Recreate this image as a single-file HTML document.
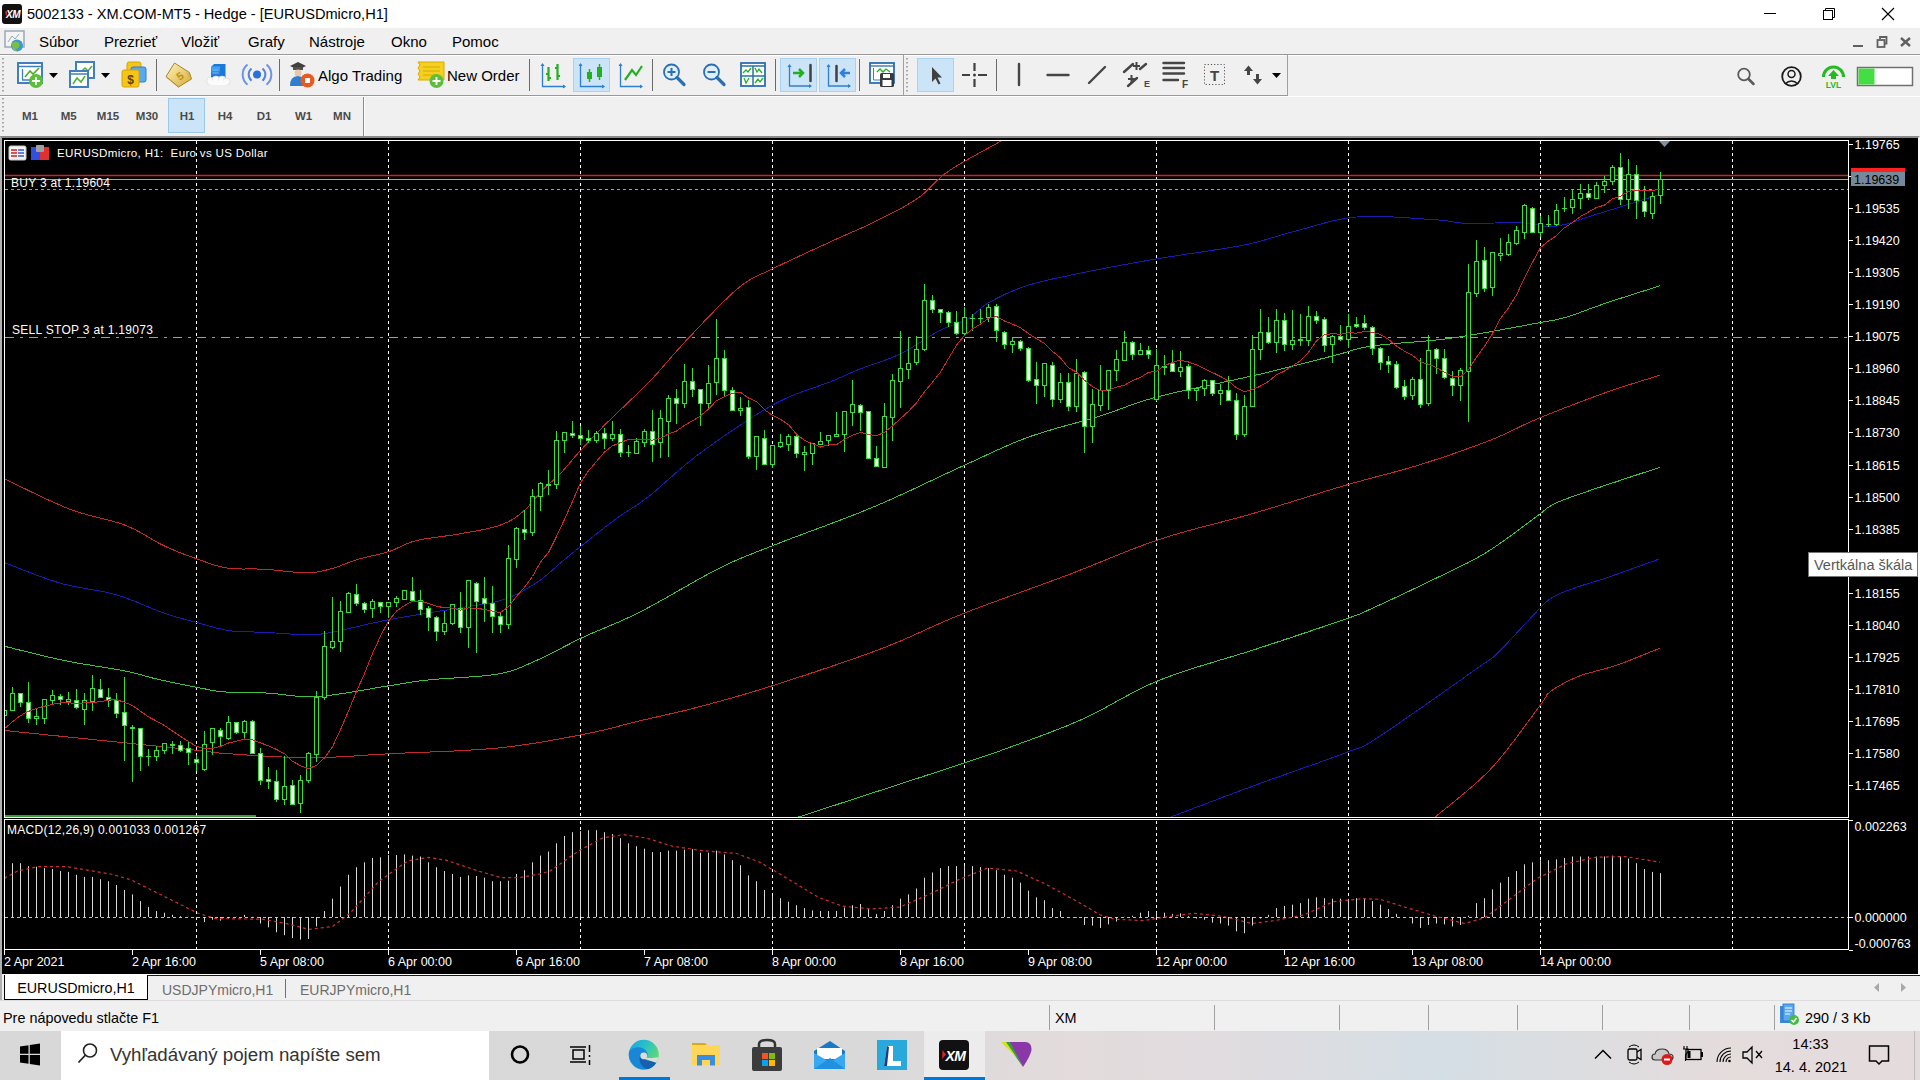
<!DOCTYPE html>
<html><head><meta charset="utf-8">
<style>
*{box-sizing:border-box}
html,body{margin:0;padding:0;width:1920px;height:1080px;overflow:hidden;background:#f0f0f0;font-family:"Liberation Sans",sans-serif;position:relative}
.a{position:absolute}
#title{left:0;top:0;width:1920px;height:28px;background:#fff}
#title .t{left:27px;top:6px;font-size:14.6px;color:#000;white-space:nowrap}
#menu{left:0;top:28px;width:1920px;height:26px;background:#f0f0f0}
#menu span{position:absolute;top:5px;font-size:15px;color:#000}
#tb{left:0;top:54px;width:1920px;height:42px;background:#f0f0f0;border-top:1px solid #999}
#tf{left:0;top:96px;width:1920px;height:40px;background:#f0f0f0}
#tf span{position:absolute;top:14px;font-size:11.5px;font-weight:bold;color:#4a4a4a}
#chartbg{left:0;top:136px;width:1920px;height:838px;background:#000;border-top:2px solid #8a8a8a;border-left:2px solid #b0b0b0;border-right:2px solid #fff}
.pl{position:absolute;left:1854.5px;font-size:12.5px;color:#fff;white-space:nowrap;line-height:16px}
.tl{position:absolute;top:954px;font-size:12.5px;color:#fff;white-space:nowrap;line-height:16px}
.ct{position:absolute;font-size:12px;color:#fff;white-space:nowrap;line-height:14px;letter-spacing:0.3px}
#tabs{left:0;top:974px;width:1920px;height:27px;background:#f0f0f0;border-bottom:1px solid #dcdcdc}
#status{left:0;top:1001px;width:1920px;height:30px;background:#f0f0f0}
#status span{position:absolute;top:9px;font-size:14.4px;color:#000;white-space:nowrap}
.sep{position:absolute;top:4px;width:1px;height:25px;background:#a0a0a0}
#task{left:0;top:1031px;width:1920px;height:49px;background:linear-gradient(90deg,#d8d8d8 0%,#d9d9d9 44%,#e3dbdc 56%,#e0dcdf 64%,#d4dee5 75%,#dcdde0 82%,#e5dcdc 90%,#e4dcdc 100%)}
</style></head><body>
<div id="title" class="a">
  <svg class="a" style="left:2px;top:4px" width="20" height="20"><rect x="0" y="0" width="20" height="20" rx="3" fill="#111"/><text x="11" y="14" font-family="Liberation Sans" font-size="10" font-weight="bold" font-style="italic" fill="#fff" text-anchor="middle" letter-spacing="-0.5">XM</text><path d="M3 8L5.5 6L4.5 13Z" fill="#e02020"/></svg>
  <div class="a t">5002133 - XM.COM-MT5 - Hedge - [EURUSDmicro,H1]</div>
  <div class="a" style="left:1764px;top:13px;width:12px;height:1px;background:#000"></div>
  <svg class="a" style="left:1820px;top:5px" width="20" height="18"><path d="M5.5 5.5V3.5H14.5V12.5H12.5" fill="none" stroke="#000" stroke-width="1"/><rect x="3.5" y="5.5" width="9" height="9" fill="none" stroke="#000" stroke-width="1"/></svg>
  <svg class="a" style="left:1881px;top:7px" width="14" height="14"><path d="M1 1L13 13M13 1L1 13" stroke="#000" stroke-width="1.2"/></svg>
</div>
<div id="menu" class="a">
  <svg class="a" style="left:4px;top:2px" width="22" height="22"><rect x="1" y="1" width="19" height="16" fill="#f4f4f4" stroke="#98a8b8" stroke-width="1.5"/><path d="M4 12L8 6L11 9L15 4" stroke="#9ab" stroke-width="1" fill="none"/><circle cx="13" cy="15.5" r="6" fill="#3a9ad0"/><path d="M8 13Q12 10 15 13Q17 16 13 19Q9 19 8 16Z" fill="#7ac040"/><path d="M8 17Q10 21 13 21Q10 18 8 17Z" fill="#e0b030"/></svg>
  <span style="left:39px">Súbor</span>
  <span style="left:104px">Prezrieť</span>
  <span style="left:181px">Vložiť</span>
  <span style="left:248px">Grafy</span>
  <span style="left:309px">Nástroje</span>
  <span style="left:391px">Okno</span>
  <span style="left:452px">Pomoc</span>
  <div class="a" style="left:1853px;top:17px;width:10px;height:2px;background:#606060"></div>
  <svg class="a" style="left:1875px;top:7px" width="14" height="14"><path d="M5 4V2H11.5V8.5H9.5" fill="none" stroke="#606060" stroke-width="1.8"/><rect x="2.5" y="5" width="7" height="7" fill="none" stroke="#606060" stroke-width="1.8"/></svg>
  <svg class="a" style="left:1899px;top:9px" width="13" height="10"><path d="M2 1L11 9M11 1L2 9" stroke="#606060" stroke-width="2.4"/></svg>
</div>
<div id="tb" class="a"><div class="a" style="left:0;top:0;width:1920px;height:1px;background:#fff"></div><div class="a" style="left:0;top:40px;width:1288px;height:1px;background:#999"></div><div class="a" style="left:0;top:41px;width:1288px;height:1px;background:#fff"></div><span class="a" style="left:318px;top:12px;font-size:15px;color:#000">Algo Trading</span><span class="a" style="left:447px;top:12px;font-size:15px;color:#000">New Order</span></div>
<div id="tf" class="a">
  <div class="a" style="left:168px;top:2px;width:37px;height:35px;background:#cce4f7;border:1px solid #99c9ef"></div>
  <span style="left:10px;width:40px;text-align:center">M1</span><span style="left:48.7px;width:40px;text-align:center">M5</span><span style="left:88px;width:40px;text-align:center">M15</span><span style="left:127px;width:40px;text-align:center">M30</span><span style="left:167px;width:40px;text-align:center">H1</span><span style="left:205px;width:40px;text-align:center">H4</span><span style="left:244px;width:40px;text-align:center">D1</span><span style="left:283.5px;width:40px;text-align:center">W1</span><span style="left:322px;width:40px;text-align:center">MN</span><div class="a" style="left:0;top:0;width:1920px;height:1px;background:#fff"></div><div class="a" style="left:363px;top:1px;width:1px;height:39px;background:#8a8a8a"></div><div class="a" style="left:364px;top:1px;width:1px;height:39px;background:#fff"></div>
</div>
<svg class="a" style="left:0;top:0" width="1920" height="136">
<!-- grips -->
<line x1="3" y1="58" x2="3" y2="94" stroke="#a8a8a8" stroke-width="2" stroke-dasharray="1.5,2.5"/>
<line x1="3" y1="98" x2="3" y2="134" stroke="#a8a8a8" stroke-width="2" stroke-dasharray="1.5,2.5"/>
<line x1="907" y1="58" x2="907" y2="94" stroke="#a8a8a8" stroke-width="2" stroke-dasharray="1.5,2.5"/>
<!-- separators -->
<g stroke="#6a6a6a" stroke-width="1">
<line x1="156.5" y1="59" x2="156.5" y2="91"/>
<line x1="279.5" y1="59" x2="279.5" y2="91"/>
<line x1="529.5" y1="59" x2="529.5" y2="91"/>
<line x1="652.5" y1="59" x2="652.5" y2="91"/>
<line x1="775.5" y1="59" x2="775.5" y2="91"/>
<line x1="859.5" y1="59" x2="859.5" y2="91"/>
<line x1="996.5" y1="59" x2="996.5" y2="91"/>
</g>
<line x1="903.5" y1="55" x2="903.5" y2="95" stroke="#a0a0a0"/>
<line x1="1287.5" y1="55" x2="1287.5" y2="95" stroke="#a0a0a0"/>
<!-- highlights -->
<g fill="#cce4f7" stroke="#a8d2f2">
<rect x="573.5" y="58.5" width="36" height="33"/>
<rect x="780.5" y="58.5" width="36" height="33"/>
<rect x="819.5" y="58.5" width="36" height="33"/>
<rect x="917.5" y="58.5" width="36" height="33"/>
</g>
<!-- new chart -->
<rect x="18" y="63" width="24" height="20" fill="#fff" stroke="#3f7fc0" stroke-width="2"/>
<line x1="18" y1="66.5" x2="42" y2="66.5" stroke="#3f7fc0" stroke-width="1.5"/>
<path d="M22.5 69V80H33" stroke="#3f7fc0" stroke-width="1.3" fill="none"/>
<path d="M25 77L30 71L33 74L39 68" stroke="#4caf2a" stroke-width="1.6" fill="none"/>
<circle cx="36" cy="81" r="7" fill="#5cbf3a"/>
<path d="M36 77V85M32 81H40" stroke="#fff" stroke-width="1.8"/>
<polygon points="49,73 58,73 53.5,78" fill="#000"/>
<!-- profiles -->
<rect x="76" y="62" width="18" height="16" fill="#fff" stroke="#3f7fc0" stroke-width="2"/>
<path d="M80 73L85 68L88 71L92 66" stroke="#4caf2a" stroke-width="1.5" fill="none"/>
<rect x="70" y="71" width="18" height="16" fill="#fff" stroke="#3f7fc0" stroke-width="2"/>
<line x1="70" y1="74" x2="88" y2="74" stroke="#3f7fc0" stroke-width="1.5"/>
<path d="M73 84L77 78L81 82L85 76" stroke="#4caf2a" stroke-width="1.5" fill="none"/>
<polygon points="101,73 110,73 105.5,78" fill="#000"/>
<!-- money -->
<rect x="127" y="62" width="14" height="12" rx="2" fill="#f5c518" stroke="#d9a400"/>
<rect x="131" y="67" width="15" height="15" rx="2" fill="#5aa9f0" stroke="#2f7fd0"/>
<rect x="122" y="70" width="17" height="17" rx="2" fill="#f5c518" stroke="#d9a400"/>
<text x="130.5" y="84" font-family="Liberation Sans" font-size="12" font-weight="bold" fill="#5a4200" text-anchor="middle">$</text>
<!-- book 5 -->
<defs><linearGradient id="bk" x1="0" y1="0" x2="1" y2="1"><stop offset="0" stop-color="#fff4c0"/><stop offset="1" stop-color="#d8aa30"/></linearGradient>
<linearGradient id="sv" x1="0" y1="0" x2="0" y2="1"><stop offset="0" stop-color="#4aa8f8"/><stop offset="1" stop-color="#1060c8"/></linearGradient></defs>
<path d="M174.5 63L189.5 72.5L191.5 79L178.5 87L166 76.5Z" fill="url(#bk)" stroke="#9a7a20" stroke-width="0.9"/>
<path d="M178.5 87L166 76.5L167 78L179 88Z" fill="#b08a28"/>
<path d="M186 72L190 77M188 73L191 78" stroke="#c8a850" stroke-width="0.6"/>
<text x="180" y="80" font-family="Liberation Sans" font-size="11" font-weight="bold" fill="#c09010" text-anchor="middle" transform="rotate(-35 180 76)">5</text>
<!-- server cloud -->
<path d="M211 67L214 64H225.5V78L220 80H211Z" fill="#1a78d8"/>
<rect x="211" y="66.5" width="9" height="13" fill="url(#sv)"/>
<path d="M212.5 70H218.5M212.5 73H218.5" stroke="#8ac8ff" stroke-width="0.8"/>
<g fill="#fbfbfb" stroke="#dadada" stroke-width="0.7">
<circle cx="210.5" cy="81" r="3.8"/><circle cx="216" cy="80" r="4"/><circle cx="222" cy="80" r="4"/><circle cx="226.5" cy="81.5" r="3.5"/>
</g>
<rect x="209" y="80.5" width="19" height="4.5" rx="2" fill="#fbfbfb"/>
<!-- signal -->
<circle cx="257" cy="74.6" r="4" fill="#2a6ee0"/>
<path d="M251.5 68.5A8 8 0 0 0 251.5 80.7M262.5 68.5A8 8 0 0 1 262.5 80.7" stroke="#3a70d8" stroke-width="2" fill="none" opacity="0.85"/>
<path d="M247.5 64.5A13 13 0 0 0 247.5 84.7M266.5 64.5A13 13 0 0 1 266.5 84.7" stroke="#4a7ee0" stroke-width="2" fill="none" opacity="0.8"/>
<!-- algo -->
<path d="M290 66L298 62L306 66L298 70Z" fill="#404040"/>
<rect x="293" y="67" width="10" height="3" fill="#505050"/>
<circle cx="298" cy="73" r="3.5" fill="#e8c8a8"/>
<path d="M290 86Q290 76 298 76Q305 76 305 86Z" fill="#2f7fd0"/>
<circle cx="307.5" cy="80.5" r="7" fill="#e85a20"/>
<rect x="305" y="78" width="5" height="5" fill="#fff"/>
<!-- new order -->
<path d="M418 62H444V80H418L420 77L418 74L420 71L418 68L420 65Z" fill="#f5d020" stroke="#d8a800"/>
<path d="M423 67H440M423 71H440M423 75H436" stroke="#d8a800" stroke-width="1"/>
<circle cx="436.5" cy="81" r="7" fill="#5cbf3a"/>
<path d="M436.5 77V85M432.5 81H440.5" stroke="#fff" stroke-width="1.8"/>
<!-- bar chart -->
<g stroke="#2f7fd0" stroke-width="1.3" fill="#2f7fd0">
<path d="M542.5 64V86.5H565" fill="none"/>
<polygon points="540.5,66 542.5,63 544.5,66" stroke="none"/>
<polygon points="563,84.5 566,86.5 563,88.5" stroke="none"/>
<path d="M580.5 64V86.5H604" fill="none"/>
<polygon points="578.5,66 580.5,63 582.5,66" stroke="none"/>
<polygon points="602,84.5 605,86.5 602,88.5" stroke="none"/>
<path d="M620.5 64V86.5H642" fill="none"/>
<polygon points="618.5,66 620.5,63 622.5,66" stroke="none"/>
<polygon points="640,84.5 643,86.5 640,88.5" stroke="none"/>
</g>
<path d="M548.5 67V81M546 74H548.5M551 78H548.5M557.5 64V80M555 68H557.5M560 76H557.5" stroke="#22b022" stroke-width="2.2" fill="none"/>
<path d="M589.5 69V82M599.5 64V80" stroke="#22b022" stroke-width="1.5"/>
<rect x="587" y="72" width="5" height="7" fill="#22b022"/>
<rect x="597" y="67" width="5" height="10" fill="#22b022"/>
<path d="M625 80L632 70L636 75L642 66" stroke="#22b022" stroke-width="2.2" fill="none"/>
<!-- zoom in/out -->
<circle cx="671.5" cy="72" r="7.5" fill="#e0f0fb" stroke="#2a6fb0" stroke-width="1.8"/>
<path d="M677 77.5L684 84.5" stroke="#2a6fb0" stroke-width="3.2" stroke-linecap="round"/>
<path d="M671.5 68V76M667.5 72H675.5" stroke="#2a6fb0" stroke-width="2"/>
<circle cx="711.5" cy="72" r="7.5" fill="#e0f0fb" stroke="#2a6fb0" stroke-width="1.8"/>
<path d="M717 77.5L724 84.5" stroke="#2a6fb0" stroke-width="3.2" stroke-linecap="round"/>
<path d="M707.5 72H715.5" stroke="#2a6fb0" stroke-width="2"/>
<!-- tile -->
<rect x="741" y="63" width="24" height="23" fill="#fff" stroke="#2a6fb0" stroke-width="1.8"/>
<path d="M741 66H765M753 66V86M741 76H765" stroke="#2a6fb0" stroke-width="1.5"/>
<path d="M743 73L746 70L748 72L751 68M755 68L757 72L759 69L762 73M744 78L746 83L749 78M755 83L758 79L760 82L763 78" stroke="#22b022" stroke-width="1.3" fill="none"/>
<!-- autoscroll / shift -->
<g stroke="#2f7fd0" stroke-width="1.3" fill="#2f7fd0">
<path d="M789.5 65V86H811" fill="none"/>
<polygon points="787.5,67 789.5,64 791.5,67" stroke="none"/>
<polygon points="809,84 812,86 809,88" stroke="none"/>
<path d="M828.5 65V86H850" fill="none"/>
<polygon points="826.5,67 828.5,64 830.5,67" stroke="none"/>
<polygon points="848,84 851,86 848,88" stroke="none"/>
</g>
<path d="M793 73H803M799 69L803 73L799 77" stroke="#22b022" stroke-width="2.5" fill="none"/>
<path d="M810.5 65V81" stroke="#404040" stroke-width="2.5" stroke-linecap="round"/>
<path d="M836.5 66V81" stroke="#404040" stroke-width="2.5" stroke-linecap="round"/>
<path d="M850 73H841M845 69L841 73L845 77" stroke="#2f7fe0" stroke-width="2.5" fill="none"/>
<!-- save chart -->
<rect x="870" y="63" width="24" height="20" fill="#fff" stroke="#2a6fb0" stroke-width="1.8"/>
<line x1="870" y1="66" x2="894" y2="66" stroke="#2a6fb0" stroke-width="1.3"/>
<path d="M873.5 68V80H880" stroke="#2f7fd0" stroke-width="1" fill="none"/>
<path d="M877 72L880 69L883 72L886 69L890 72" stroke="#22b022" stroke-width="1.3" fill="none"/>
<rect x="880" y="73" width="14" height="14" rx="1.5" fill="#3a3a3a"/>
<rect x="883" y="74" width="7" height="4" fill="#fff"/>
<rect x="882.5" y="80" width="9" height="6" fill="#fff"/>
<!-- cursor -->
<path d="M932 67L932 82L935.5 78.5L938.5 84.5L940.5 83.5L937.5 77.5L942 77.5Z" fill="#404040"/>
<!-- crosshair -->
<path d="M962 75H970M978 75H987M974.5 63V71M974.5 79V87" stroke="#404040" stroke-width="2.2"/>
<circle cx="974.5" cy="75" r="1.5" fill="#404040"/>
<!-- line tools -->
<g stroke="#454545" stroke-width="2.4" stroke-linecap="round" fill="none">
<path d="M1019 64V85"/>
<path d="M1047.5 75H1068.5"/>
<path d="M1089 83L1105 67"/>
<path d="M1124 72L1133 64M1128 86L1137 78M1140 69L1146 64"/>
<path d="M1163.5 63H1184M1163.5 68H1184M1163.5 73.5H1184M1163.5 80H1178"/>

</g>
<path d="M1136.5 62V70M1133 66H1140M1131.5 75V83M1128 79H1135" stroke="#454545" stroke-width="2"/>
<text x="1147" y="87" font-family="Liberation Sans" font-size="9" font-weight="bold" fill="#454545" text-anchor="middle">E</text>
<text x="1185" y="88" font-family="Liberation Sans" font-size="10" font-weight="bold" fill="#454545" text-anchor="middle">F</text>
<rect x="1204.5" y="64.5" width="20" height="20" fill="none" stroke="#555" stroke-dasharray="1.2,2"/>
<text x="1214.5" y="81" font-family="Liberation Sans" font-size="15" font-weight="bold" fill="#454545" text-anchor="middle">T</text>
<polygon points="1244,71 1248.5,65.5 1253,71" fill="#454545"/><rect x="1247" y="70" width="3" height="5" fill="#454545"/><rect x="1256" y="74" width="3" height="6" fill="#454545"/><polygon points="1253,79 1257.5,84.5 1262,79" fill="#454545"/>
<polygon points="1272,73 1281,73 1276.5,78" fill="#000"/>
<!-- right icons -->
<circle cx="1744" cy="74.5" r="5.8" fill="none" stroke="#5a5a5a" stroke-width="1.8"/>
<path d="M1748.5 79L1753.5 84" stroke="#5a5a5a" stroke-width="2.5" stroke-linecap="round"/>
<circle cx="1791.5" cy="76.5" r="9.3" fill="none" stroke="#1a1a1a" stroke-width="1.8"/>
<circle cx="1791.5" cy="74" r="3.5" fill="none" stroke="#1a1a1a" stroke-width="1.5"/>
<path d="M1785 84Q1791.5 78 1798 84" fill="none" stroke="#1a1a1a" stroke-width="1.5"/>
<path d="M1823.5 77A10 10 0 0 1 1843.5 77" fill="none" stroke="#22bb22" stroke-width="3"/>
<polygon points="1833.5,70 1839,76 1836,76 1836,79 1831,79 1831,76 1828,76" fill="#22bb22"/>
<text x="1833.5" y="88" font-family="Liberation Sans" font-size="8.5" font-weight="bold" fill="#22bb22" text-anchor="middle">LVL</text>
<rect x="1857.5" y="67.5" width="55" height="18" fill="#fff" stroke="#707070" stroke-width="1.5"/>
<rect x="1858.5" y="68.5" width="16" height="16" fill="#44dd44"/>
</svg>

<div id="chartbg" class="a"></div>
<svg width="1920" height="1080" style="position:absolute;left:0;top:0">
<defs><clipPath id="mc"><rect x="5" y="141" width="1843" height="676"/></clipPath><clipPath id="dc"><rect x="5" y="821" width="1843" height="129"/></clipPath></defs>
<rect x="4.5" y="140.5" width="1844" height="677" fill="none" stroke="#fff" stroke-width="1"/>
<rect x="4.5" y="819.5" width="1844" height="130" fill="none" stroke="#fff" stroke-width="1"/>
<line x1="196.5" y1="141" x2="196.5" y2="817" stroke="#fff" stroke-dasharray="3,3"/>
<line x1="196.5" y1="821" x2="196.5" y2="949" stroke="#fff" stroke-dasharray="3,3"/>
<line x1="388.5" y1="141" x2="388.5" y2="817" stroke="#fff" stroke-dasharray="3,3"/>
<line x1="388.5" y1="821" x2="388.5" y2="949" stroke="#fff" stroke-dasharray="3,3"/>
<line x1="580.5" y1="141" x2="580.5" y2="817" stroke="#fff" stroke-dasharray="3,3"/>
<line x1="580.5" y1="821" x2="580.5" y2="949" stroke="#fff" stroke-dasharray="3,3"/>
<line x1="772.5" y1="141" x2="772.5" y2="817" stroke="#fff" stroke-dasharray="3,3"/>
<line x1="772.5" y1="821" x2="772.5" y2="949" stroke="#fff" stroke-dasharray="3,3"/>
<line x1="964.5" y1="141" x2="964.5" y2="817" stroke="#fff" stroke-dasharray="3,3"/>
<line x1="964.5" y1="821" x2="964.5" y2="949" stroke="#fff" stroke-dasharray="3,3"/>
<line x1="1156.5" y1="141" x2="1156.5" y2="817" stroke="#fff" stroke-dasharray="3,3"/>
<line x1="1156.5" y1="821" x2="1156.5" y2="949" stroke="#fff" stroke-dasharray="3,3"/>
<line x1="1348.5" y1="141" x2="1348.5" y2="817" stroke="#fff" stroke-dasharray="3,3"/>
<line x1="1348.5" y1="821" x2="1348.5" y2="949" stroke="#fff" stroke-dasharray="3,3"/>
<line x1="1540.5" y1="141" x2="1540.5" y2="817" stroke="#fff" stroke-dasharray="3,3"/>
<line x1="1540.5" y1="821" x2="1540.5" y2="949" stroke="#fff" stroke-dasharray="3,3"/>
<line x1="1732.5" y1="141" x2="1732.5" y2="817" stroke="#fff" stroke-dasharray="3,3"/>
<line x1="1732.5" y1="821" x2="1732.5" y2="949" stroke="#fff" stroke-dasharray="3,3"/>
<g clip-path="url(#mc)">
<line x1="5" y1="175.5" x2="1848" y2="175.5" stroke="#d02020" stroke-width="1.3"/>
<line x1="5" y1="179.5" x2="1848" y2="179.5" stroke="#a0a8b0" stroke-width="1"/>
<line x1="5" y1="189.5" x2="1848" y2="189.5" stroke="#6ac46a" stroke-dasharray="3,3"/>
<line x1="5" y1="337.5" x2="1848" y2="337.5" stroke="#6ac46a" stroke-dasharray="9,6,3,6"/>
<line x1="5" y1="816" x2="256" y2="816" stroke="#50d050" stroke-width="1.5"/>
<polyline points="4.6,478.9 6.3,479.7 8.3,480.7 10.5,481.7 13.0,483.0 15.7,484.3 18.7,485.7 21.7,487.2 25.0,488.8 28.3,490.4 31.8,492.1 35.3,493.8 38.9,495.5 42.5,497.2 46.1,498.9 49.7,500.5 53.2,502.1 56.7,503.7 60.1,505.2 63.3,506.6 66.4,507.8 69.4,509.0 72.7,510.2 76.1,511.4 79.4,512.5 82.7,513.4 86.0,514.4 89.2,515.3 92.4,516.1 95.6,516.9 98.8,517.7 101.9,518.4 105.0,519.2 108.0,520.0 111.0,520.8 113.9,521.6 116.8,522.4 119.6,523.3 122.3,524.2 125.0,525.2 128.6,526.7 132.0,528.2 135.3,529.8 138.5,531.5 141.7,533.2 144.7,535.0 147.6,536.7 150.5,538.4 153.3,540.0 156.1,541.7 158.9,543.2 161.6,544.6 164.4,546.0 167.9,547.6 171.4,549.1 174.7,550.5 178.0,551.9 181.2,553.1 184.3,554.3 187.5,555.5 190.6,556.6 193.7,557.7 196.8,558.8 199.9,559.9 202.9,561.0 205.8,562.1 208.7,563.1 211.6,564.1 214.5,565.1 217.4,565.9 220.5,566.7 223.6,567.4 226.9,568.0 229.7,568.4 232.6,568.6 235.6,568.8 238.5,568.9 241.6,569.0 244.7,569.0 247.8,568.9 251.0,568.9 254.2,568.9 257.4,569.0 260.6,569.0 263.9,569.2 267.0,569.4 270.2,569.7 273.5,570.0 276.9,570.3 280.4,570.7 283.8,571.1 287.2,571.4 290.6,571.8 293.9,572.1 297.0,572.3 300.1,572.5 302.9,572.7 305.6,572.7 309.5,572.6 313.0,572.4 316.1,572.1 319.0,571.7 321.7,571.1 324.5,570.5 327.4,569.8 330.5,569.0 333.4,568.2 336.3,567.2 339.3,566.2 342.2,565.0 345.2,563.9 348.3,562.7 351.3,561.5 354.5,560.4 357.7,559.4 360.7,558.6 363.7,557.8 366.9,557.0 370.0,556.3 373.2,555.6 376.5,554.9 379.6,554.1 382.8,553.3 385.8,552.5 388.8,551.6 391.9,550.5 394.8,549.3 397.6,548.0 400.3,546.7 403.1,545.4 405.9,544.1 409.0,542.9 412.3,541.7 416.0,540.7 418.6,540.1 421.3,539.5 424.2,539.0 427.1,538.5 430.2,538.1 433.3,537.6 436.5,537.2 439.8,536.8 443.0,536.4 446.2,535.9 449.5,535.5 452.6,535.0 455.8,534.5 458.8,534.0 462.1,533.4 465.4,532.8 468.8,532.2 472.2,531.6 475.6,531.0 478.9,530.4 482.2,529.7 485.5,529.1 488.7,528.4 491.7,527.6 494.6,526.9 497.4,526.1 500.0,525.2 504.3,523.5 508.1,521.8 511.5,520.0 514.7,518.0 517.7,515.9 520.6,513.5 523.7,511.0 527.4,507.6 531.0,503.6 534.6,499.4 538.0,495.3 541.3,491.4 544.4,488.0 548.4,484.3 551.9,481.5 555.3,478.6 559.3,474.8 562.4,471.5 565.7,467.7 569.1,463.6 572.7,459.4 576.3,455.2 580.0,451.0 583.2,447.5 586.6,443.8 590.0,440.2 593.5,436.5 596.9,432.9 600.4,429.4 603.7,426.0 606.9,422.8 610.1,419.7 613.2,416.7 616.3,413.7 619.5,410.7 622.7,407.6 626.0,404.4 628.9,401.6 631.8,398.9 634.6,396.2 637.6,393.5 640.6,390.5 643.8,387.4 647.3,383.9 651.0,380.0 653.6,377.2 656.4,374.2 659.2,371.0 662.0,367.7 665.0,364.3 668.1,360.8 671.2,357.2 674.4,353.5 677.8,349.8 681.2,346.0 684.7,342.1 688.3,338.3 691.1,335.3 694.1,332.2 697.2,328.9 700.4,325.5 703.6,322.1 707.0,318.6 710.3,315.1 713.7,311.6 717.1,308.2 720.4,304.8 723.7,301.5 727.0,298.4 730.1,295.4 733.1,292.6 736.0,290.0 738.8,287.7 742.5,284.8 745.8,282.4 748.8,280.4 751.7,278.7 754.4,277.2 757.2,275.9 760.0,274.6 763.0,273.3 766.2,271.9 769.8,270.2 773.8,268.3 776.3,267.0 779.0,265.7 781.9,264.3 784.8,262.9 787.9,261.5 791.0,260.0 794.3,258.5 797.5,257.0 800.8,255.4 804.2,253.9 807.5,252.3 810.8,250.8 814.1,249.3 817.3,247.8 820.5,246.4 823.6,245.0 826.6,243.6 829.5,242.3 832.2,241.0 835.7,239.4 839.1,237.8 842.4,236.4 845.6,235.0 848.6,233.6 851.6,232.3 854.6,231.1 857.5,229.8 860.4,228.5 863.2,227.2 866.1,225.9 869.0,224.5 872.0,223.1 875.0,221.6 878.1,220.1 881.2,218.5 884.4,216.9 887.5,215.3 890.7,213.7 893.9,212.1 897.1,210.4 900.2,208.8 903.3,207.1 906.3,205.4 909.3,203.6 912.2,201.9 915.0,200.1 917.7,198.3 921.2,195.7 924.3,193.2 927.2,190.5 929.9,187.8 932.5,185.1 935.3,182.4 938.1,179.6 941.3,176.8 944.8,173.9 948.8,171.0 951.3,169.3 954.1,167.5 957.1,165.7 960.3,163.8 963.7,161.8 967.2,159.8 970.7,157.8 974.3,155.8 977.8,153.8 981.4,151.9 984.8,150.0 988.1,148.2 991.2,146.5 994.2,144.9 996.8,143.4 999.2,142.1 1001.3,141.0 1003.0,140.0" fill="none" stroke="#c02a2a" stroke-width="1" shape-rendering="crispEdges"/>
<polyline points="4.6,562.7 6.3,563.3 8.3,564.1 10.7,565.0 13.2,566.0 16.0,567.1 19.0,568.3 22.2,569.6 25.5,570.9 28.9,572.2 32.4,573.5 36.0,574.9 39.6,576.2 43.2,577.5 46.8,578.8 50.3,580.0 53.7,581.1 57.0,582.2 60.2,583.1 63.3,584.0 66.4,584.7 69.5,585.5 72.7,586.1 75.8,586.8 79.0,587.4 82.1,587.9 85.2,588.5 88.4,589.0 91.5,589.6 94.6,590.1 97.7,590.6 100.8,591.2 103.8,591.8 106.8,592.5 109.8,593.2 112.8,593.9 115.7,594.7 119.0,595.7 122.2,596.7 125.5,597.9 128.7,599.1 132.0,600.3 135.2,601.5 138.4,602.8 141.5,604.1 144.6,605.4 147.6,606.6 150.6,607.9 153.5,609.1 156.4,610.2 159.1,611.3 161.8,612.3 164.4,613.2 168.3,614.5 171.9,615.7 175.3,616.7 178.5,617.6 181.6,618.5 184.6,619.3 187.6,620.1 190.6,620.9 193.6,621.7 196.8,622.5 200.0,623.4 203.2,624.3 206.4,625.2 209.5,626.1 212.7,627.0 215.9,627.9 219.1,628.7 222.4,629.4 225.8,630.1 229.2,630.6 232.1,631.0 235.1,631.3 238.1,631.5 241.1,631.6 244.2,631.8 247.3,631.9 250.4,631.9 253.5,632.0 256.7,632.1 259.8,632.1 263.0,632.3 266.2,632.4 269.2,632.6 272.3,632.8 275.4,633.0 278.6,633.2 281.8,633.5 285.1,633.7 288.2,633.9 291.4,634.1 294.5,634.3 297.4,634.5 300.3,634.6 303.0,634.7 305.6,634.7 309.2,634.7 312.1,634.7 314.5,634.7 316.9,634.5 319.4,634.3 322.3,633.9 325.9,633.3 330.5,632.5 332.8,632.1 335.2,631.6 337.7,631.1 340.4,630.5 343.2,629.9 346.0,629.2 349.0,628.5 352.1,627.8 355.2,627.1 358.4,626.3 361.7,625.6 365.0,624.8 368.4,624.0 371.8,623.3 375.2,622.5 378.6,621.8 382.0,621.1 385.4,620.4 388.8,619.7 391.6,619.2 394.6,618.6 397.6,618.1 400.6,617.6 403.7,617.0 406.9,616.5 410.1,615.9 413.4,615.4 416.6,614.9 419.9,614.3 423.1,613.8 426.4,613.3 429.6,612.8 432.8,612.2 436.0,611.7 439.1,611.2 442.2,610.7 445.2,610.3 448.1,609.8 450.9,609.3 453.7,608.9 456.3,608.4 458.8,608.0 462.7,607.3 466.4,606.8 469.9,606.2 473.2,605.8 476.4,605.3 479.5,604.9 482.4,604.5 485.2,604.0 488.0,603.5 490.7,603.0 493.4,602.4 496.1,601.8 498.9,601.0 501.6,600.2 505.1,599.0 508.5,597.7 511.9,596.3 515.2,594.8 518.4,593.2 521.6,591.6 524.7,589.9 527.7,588.1 530.7,586.3 533.6,584.5 536.5,582.7 539.9,580.4 543.1,578.0 546.3,575.4 549.3,572.8 552.3,570.2 555.2,567.6 558.1,565.0 561.0,562.4 563.9,560.0 567.1,557.4 570.2,554.9 573.2,552.4 576.3,550.0 579.3,547.6 582.4,545.1 585.6,542.6 588.9,540.0 592.0,537.6 595.2,535.0 598.4,532.4 601.7,529.8 605.1,527.2 608.5,524.6 611.8,522.0 615.2,519.4 618.5,517.0 621.7,514.8 624.6,512.8 627.5,511.0 630.4,509.2 633.4,507.3 636.5,505.3 639.9,503.0 643.7,500.2 648.0,497.0 650.4,495.1 653.0,493.0 655.6,490.8 658.2,488.5 661.0,486.0 663.8,483.5 666.7,481.0 669.7,478.3 672.8,475.6 675.9,472.8 679.1,470.1 682.4,467.3 685.8,464.4 689.2,461.6 692.7,458.8 696.3,456.0 700.0,453.3 702.7,451.3 705.4,449.3 708.3,447.3 711.2,445.2 714.2,443.0 717.3,440.8 720.4,438.6 723.6,436.4 726.8,434.2 730.0,432.0 733.2,429.8 736.5,427.6 739.8,425.4 743.0,423.2 746.3,421.1 749.5,419.0 752.7,417.0 755.9,415.0 759.1,413.0 762.1,411.1 765.2,409.3 768.1,407.6 771.0,406.0 773.8,404.4 777.3,402.6 780.7,400.8 784.2,399.2 787.6,397.6 791.0,396.1 794.4,394.7 797.8,393.4 801.0,392.2 804.3,391.0 807.5,389.8 810.6,388.7 813.6,387.7 816.5,386.7 819.4,385.7 822.2,384.7 824.9,383.8 827.4,382.9 829.9,381.9 832.2,381.0 836.6,379.2 840.2,377.6 843.3,376.3 846.0,375.0 848.5,373.9 851.0,372.8 853.6,371.6 856.5,370.4 860.0,369.0 862.7,368.0 865.5,366.9 868.4,365.9 871.4,364.9 874.5,363.8 877.6,362.8 880.8,361.7 884.1,360.5 887.3,359.3 890.5,358.1 893.7,356.8 896.9,355.4 900.0,354.0 903.1,352.4 906.3,350.7 909.5,348.9 912.7,347.0 915.9,345.0 919.1,343.0 922.3,341.0 925.5,339.0 928.6,337.1 931.6,335.2 934.5,333.5 937.3,331.8 940.0,330.4 943.7,328.6 947.2,327.1 950.6,325.8 953.8,324.6 956.9,323.6 959.9,322.5 962.7,321.4 965.5,320.2 968.2,318.8 971.7,316.5 974.6,314.0 977.3,311.4 980.1,308.8 983.4,306.0 987.7,303.3 990.2,301.9 992.8,300.5 995.6,299.0 998.5,297.5 1001.5,296.0 1004.7,294.4 1008.0,292.9 1011.5,291.4 1015.0,289.9 1018.8,288.5 1022.6,287.1 1026.6,285.8 1029.2,285.0 1031.9,284.2 1034.6,283.4 1037.4,282.7 1040.2,281.9 1043.1,281.2 1046.0,280.5 1049.0,279.8 1052.1,279.1 1055.2,278.4 1058.4,277.7 1061.6,277.0 1064.8,276.4 1068.1,275.7 1071.4,275.0 1074.7,274.3 1078.1,273.6 1081.5,272.9 1085.0,272.2 1087.8,271.6 1090.5,271.1 1093.4,270.5 1096.2,269.9 1099.1,269.4 1102.0,268.8 1104.9,268.2 1107.9,267.7 1110.9,267.1 1113.9,266.5 1116.9,266.0 1120.0,265.4 1123.0,264.8 1126.1,264.3 1129.3,263.7 1132.4,263.1 1135.6,262.6 1138.8,262.0 1142.0,261.4 1145.2,260.9 1148.4,260.3 1151.7,259.7 1155.0,259.2 1158.3,258.6 1161.2,258.1 1164.1,257.6 1167.1,257.1 1170.2,256.7 1173.3,256.2 1176.5,255.7 1179.7,255.2 1182.9,254.7 1186.1,254.2 1189.4,253.7 1192.7,253.3 1196.0,252.8 1199.3,252.3 1202.5,251.8 1205.8,251.3 1209.0,250.8 1212.2,250.3 1215.4,249.9 1218.6,249.4 1221.6,248.9 1224.7,248.4 1227.7,247.9 1230.6,247.4 1233.4,246.9 1236.2,246.5 1238.8,246.0 1241.4,245.5 1243.9,245.0 1248.0,244.2 1251.8,243.3 1255.4,242.5 1258.7,241.6 1261.9,240.8 1264.9,239.9 1267.8,239.1 1270.6,238.2 1273.4,237.4 1276.1,236.6 1278.9,235.7 1281.8,234.9 1284.7,234.0 1287.8,233.1 1291.0,232.3 1294.4,231.4 1297.2,230.7 1300.1,229.9 1302.9,229.1 1305.8,228.3 1308.8,227.5 1311.7,226.6 1314.7,225.7 1317.7,224.9 1320.7,224.0 1323.8,223.2 1326.9,222.4 1330.0,221.6 1333.2,220.8 1336.4,220.1 1339.7,219.4 1343.0,218.8 1346.3,218.2 1349.7,217.8 1353.1,217.3 1356.6,217.0 1359.5,216.8 1362.4,216.6 1365.5,216.5 1368.6,216.5 1371.8,216.4 1375.1,216.4 1378.5,216.5 1381.8,216.6 1385.2,216.7 1388.7,216.8 1392.1,216.9 1395.5,217.1 1398.9,217.3 1402.3,217.5 1405.6,217.7 1408.9,217.9 1412.1,218.2 1415.3,218.4 1418.4,218.6 1421.3,218.8 1424.2,219.0 1427.0,219.2 1429.6,219.4 1432.1,219.6 1434.4,219.7 1439.1,220.0 1443.2,220.4 1446.6,220.8 1449.6,221.2 1452.3,221.7 1454.8,222.1 1457.3,222.5 1459.9,222.9 1462.7,223.2 1465.8,223.4 1469.4,223.6 1472.2,223.7 1475.1,223.7 1478.1,223.6 1481.3,223.5 1484.6,223.4 1487.9,223.3 1491.3,223.2 1494.7,223.0 1498.1,222.8 1501.5,222.7 1504.8,222.6 1508.1,222.5 1511.3,222.4 1514.3,222.3 1517.2,222.3 1520.0,222.4 1523.7,222.6 1527.2,223.0 1530.5,223.5 1533.6,224.1 1536.5,224.7 1539.4,225.3 1542.4,225.9 1545.3,226.3 1548.4,226.5 1551.6,226.5 1555.0,226.3 1557.8,225.9 1560.5,225.4 1563.3,224.8 1566.1,224.2 1568.9,223.4 1571.7,222.5 1574.6,221.6 1577.6,220.6 1580.7,219.5 1583.9,218.4 1587.1,217.3 1590.5,216.2 1594.0,215.0 1597.7,213.9 1600.4,213.1 1603.4,212.1 1606.6,211.2 1609.9,210.1 1613.3,209.1 1616.9,208.0 1620.5,206.8 1624.2,205.7 1627.8,204.5 1631.5,203.4 1635.1,202.2 1638.6,201.1 1642.0,200.1 1645.2,199.0 1648.3,198.1 1651.1,197.2 1653.8,196.3 1656.1,195.6 1658.2,194.9 1659.9,194.4" fill="none" stroke="#1a1ab0" stroke-width="1" shape-rendering="crispEdges"/>
<polyline points="4.6,646.3 6.3,646.7 8.2,647.2 10.4,647.7 12.8,648.3 15.4,649.0 18.2,649.7 21.2,650.4 24.3,651.2 27.6,652.0 30.9,652.8 34.4,653.6 37.8,654.5 41.3,655.3 44.8,656.1 48.3,657.0 51.8,657.8 55.2,658.5 58.5,659.3 61.7,660.0 64.8,660.6 67.8,661.2 70.9,661.8 74.1,662.4 77.3,663.0 80.5,663.5 83.7,664.1 87.0,664.6 90.2,665.1 93.4,665.7 96.6,666.2 99.8,666.7 102.9,667.2 106.0,667.7 109.0,668.2 111.9,668.6 114.7,669.1 117.5,669.6 120.1,670.1 122.6,670.5 125.0,671.0 129.3,671.9 133.1,672.8 136.5,673.6 139.6,674.4 142.5,675.2 145.3,676.0 148.0,676.8 150.9,677.6 154.0,678.4 157.4,679.2 160.2,679.8 163.2,680.5 166.3,681.1 169.4,681.8 172.6,682.5 175.8,683.1 179.0,683.8 182.2,684.4 185.3,685.1 188.4,685.7 191.3,686.2 194.1,686.8 196.8,687.3 200.3,688.0 203.5,688.6 206.4,689.2 209.1,689.8 211.9,690.3 214.7,690.8 217.6,691.2 220.9,691.6 224.5,691.9 227.2,692.1 230.1,692.2 233.0,692.3 236.0,692.4 239.1,692.5 242.3,692.5 245.5,692.5 248.9,692.6 252.2,692.6 255.7,692.7 259.1,692.7 262.7,692.8 266.2,693.0 269.1,693.2 272.0,693.4 274.9,693.7 277.8,694.0 280.7,694.4 283.7,694.8 286.7,695.1 289.7,695.5 292.8,695.8 296.0,696.1 299.3,696.4 302.6,696.6 306.0,696.7 309.6,696.7 313.2,696.7 317.0,696.5 319.7,696.3 322.6,696.1 325.6,695.8 328.7,695.4 331.8,695.0 335.1,694.6 338.4,694.1 341.7,693.6 345.1,693.1 348.5,692.6 351.9,692.0 355.3,691.4 358.7,690.9 362.1,690.3 365.4,689.7 368.7,689.2 371.9,688.6 375.0,688.1 378.0,687.5 380.9,687.1 383.7,686.6 386.3,686.2 388.8,685.8 393.1,685.1 396.8,684.6 400.1,684.0 403.1,683.5 405.8,683.0 408.4,682.6 411.0,682.2 413.6,681.8 416.6,681.3 419.8,680.9 423.5,680.5 427.7,680.0 430.2,679.7 432.8,679.5 435.5,679.3 438.4,679.1 441.4,678.8 444.5,678.6 447.7,678.4 451.0,678.2 454.3,678.0 457.6,677.8 461.0,677.6 464.4,677.4 467.8,677.1 471.1,676.9 474.4,676.6 477.7,676.4 480.9,676.1 484.0,675.8 487.0,675.5 489.9,675.2 492.6,674.8 495.2,674.4 497.7,674.0 502.0,673.2 505.9,672.3 509.4,671.4 512.7,670.4 515.7,669.4 518.6,668.3 521.4,667.2 524.1,666.0 527.0,664.7 529.9,663.4 533.1,662.0 536.5,660.5 539.4,659.2 542.3,657.9 545.2,656.5 548.1,655.0 551.1,653.5 554.1,652.0 557.2,650.4 560.3,648.8 563.4,647.1 566.6,645.5 569.8,643.8 573.1,642.1 576.4,640.5 579.8,638.8 583.2,637.2 586.1,635.9 589.0,634.6 591.8,633.3 594.7,632.1 597.7,630.8 600.6,629.6 603.6,628.4 606.6,627.1 609.7,625.8 612.8,624.5 615.9,623.2 619.1,621.8 622.4,620.3 625.8,618.8 629.2,617.3 632.7,615.6 636.3,613.8 640.0,612.0 642.7,610.6 645.6,609.1 648.5,607.5 651.5,605.9 654.6,604.2 657.7,602.5 660.9,600.7 664.2,598.9 667.4,597.0 670.7,595.1 674.1,593.2 677.4,591.3 680.7,589.4 684.0,587.5 687.4,585.6 690.6,583.8 693.9,581.9 697.1,580.1 700.3,578.3 703.4,576.6 706.4,575.0 709.4,573.4 712.3,571.8 715.1,570.4 717.8,569.0 721.3,567.2 724.6,565.6 727.7,564.2 730.6,562.8 733.3,561.6 735.9,560.4 738.5,559.3 741.0,558.2 743.5,557.1 746.1,556.1 748.7,555.0 751.5,554.0 754.4,552.8 757.4,551.6 760.7,550.3 764.2,549.0 768.1,547.4 772.2,545.8 774.6,544.8 777.1,543.9 779.7,542.9 782.3,541.8 785.1,540.8 787.9,539.7 790.8,538.6 793.7,537.5 796.7,536.4 799.8,535.3 802.9,534.1 806.0,532.9 809.2,531.7 812.4,530.6 815.7,529.3 818.9,528.1 822.2,526.9 825.5,525.7 828.8,524.4 832.1,523.2 835.4,521.9 838.7,520.7 842.0,519.4 845.3,518.2 848.6,516.9 851.8,515.7 855.0,514.4 858.2,513.2 861.3,511.9 864.4,510.7 867.4,509.4 870.4,508.2 873.3,507.0 876.6,505.6 879.9,504.2 883.1,502.8 886.4,501.4 889.7,499.9 893.0,498.5 896.2,497.0 899.5,495.5 902.7,494.0 905.9,492.6 909.1,491.1 912.3,489.6 915.5,488.1 918.6,486.6 921.8,485.2 924.9,483.7 928.0,482.2 931.0,480.8 934.1,479.3 937.1,477.9 940.0,476.5 943.0,475.1 945.9,473.7 948.8,472.4 951.7,471.1 954.5,469.8 957.3,468.5 960.0,467.2 962.7,466.0 966.2,464.4 969.6,462.9 972.9,461.4 976.1,459.9 979.2,458.4 982.3,457.0 985.3,455.6 988.2,454.2 991.2,452.9 994.0,451.6 996.9,450.2 999.7,449.0 1002.5,447.7 1005.4,446.5 1008.2,445.2 1011.0,444.0 1013.9,442.8 1016.8,441.6 1019.7,440.5 1022.7,439.3 1025.7,438.1 1028.8,437.0 1031.8,435.9 1034.9,434.9 1037.9,433.9 1041.0,432.9 1044.2,431.9 1047.3,430.9 1050.5,430.0 1053.7,429.0 1056.9,428.1 1060.1,427.2 1063.3,426.3 1066.5,425.5 1069.7,424.6 1072.8,423.7 1076.0,422.9 1079.1,422.0 1082.2,421.2 1085.3,420.3 1088.3,419.5 1091.3,418.6 1094.3,417.7 1097.2,416.9 1100.0,416.0 1103.3,414.9 1106.5,413.9 1109.5,412.9 1112.4,411.8 1115.3,410.8 1118.0,409.8 1120.8,408.8 1123.5,407.8 1126.2,406.8 1128.9,405.8 1131.7,404.8 1134.5,403.8 1137.5,402.8 1140.5,401.8 1143.7,400.8 1147.1,399.8 1150.6,398.7 1154.3,397.7 1158.3,396.6 1160.8,396.0 1163.3,395.3 1166.0,394.7 1168.7,394.0 1171.5,393.3 1174.4,392.7 1177.3,392.0 1180.3,391.3 1183.4,390.7 1186.5,390.0 1189.6,389.3 1192.8,388.6 1196.0,388.0 1199.2,387.3 1202.4,386.6 1205.7,385.9 1209.0,385.2 1212.2,384.5 1215.5,383.8 1218.8,383.2 1222.0,382.5 1225.3,381.8 1228.5,381.1 1231.7,380.5 1234.8,379.8 1237.9,379.1 1241.0,378.5 1244.0,377.8 1247.0,377.1 1249.9,376.5 1252.7,375.8 1255.5,375.2 1259.0,374.4 1262.5,373.6 1266.0,372.7 1269.5,371.9 1272.9,371.0 1276.4,370.2 1279.8,369.4 1283.2,368.5 1286.6,367.7 1289.9,366.8 1293.2,366.0 1296.4,365.2 1299.6,364.4 1302.8,363.6 1305.9,362.8 1309.0,362.0 1312.0,361.2 1314.9,360.5 1317.7,359.7 1320.5,359.0 1323.3,358.3 1325.9,357.7 1328.5,357.0 1330.9,356.4 1333.3,355.8 1337.8,354.6 1341.6,353.6 1344.8,352.6 1347.7,351.7 1350.3,350.9 1352.7,350.2 1355.2,349.4 1357.8,348.8 1360.7,348.1 1363.9,347.4 1367.7,346.7 1372.2,346.0 1374.6,345.7 1377.1,345.3 1379.7,345.0 1382.3,344.7 1385.1,344.5 1387.9,344.2 1390.8,343.9 1393.8,343.7 1396.9,343.4 1400.0,343.1 1403.1,342.9 1406.3,342.6 1409.6,342.4 1412.9,342.1 1416.2,341.8 1419.5,341.6 1422.9,341.3 1426.3,341.0 1429.7,340.6 1433.1,340.3 1436.5,340.0 1439.9,339.6 1443.3,339.2 1446.6,338.8 1450.0,338.3 1452.9,337.9 1456.0,337.4 1459.1,337.0 1462.2,336.5 1465.5,336.0 1468.8,335.4 1472.1,334.9 1475.5,334.3 1479.0,333.7 1482.4,333.1 1485.8,332.5 1489.3,331.9 1492.7,331.3 1496.2,330.7 1499.6,330.1 1502.9,329.5 1506.2,328.8 1509.5,328.2 1512.7,327.7 1515.9,327.1 1518.9,326.5 1521.9,326.0 1524.8,325.4 1527.5,324.9 1530.2,324.4 1532.7,323.9 1535.1,323.5 1537.3,323.1 1539.4,322.7 1545.1,321.7 1549.4,320.9 1552.6,320.4 1555.1,319.9 1557.1,319.5 1559.0,319.1 1561.0,318.6 1563.4,317.9 1566.6,317.0 1569.4,316.2 1572.2,315.2 1575.1,314.2 1578.1,313.2 1581.1,312.1 1584.3,310.9 1587.5,309.7 1590.9,308.4 1594.3,307.2 1597.9,305.9 1601.6,304.6 1605.4,303.3 1608.1,302.4 1611.1,301.4 1614.2,300.4 1617.5,299.3 1620.9,298.2 1624.4,297.1 1628.0,296.0 1631.5,294.8 1635.1,293.7 1638.6,292.6 1641.9,291.5 1645.2,290.5 1648.3,289.5 1651.2,288.6 1653.8,287.7 1656.2,287.0 1658.2,286.3 1659.9,285.8" fill="none" stroke="#40c040" stroke-width="1" shape-rendering="crispEdges"/>
<polyline points="4.7,730.5 6.3,730.7 8.1,730.8 10.0,731.0 12.2,731.3 14.4,731.5 16.9,731.7 19.4,732.0 22.1,732.3 24.9,732.6 27.8,732.9 30.8,733.2 33.9,733.5 37.1,733.8 40.4,734.2 43.7,734.5 47.1,734.9 50.5,735.2 54.0,735.6 57.5,735.9 61.1,736.3 64.6,736.7 68.2,737.0 71.8,737.4 75.3,737.8 78.9,738.1 82.4,738.5 85.8,738.8 89.3,739.2 92.6,739.5 95.9,739.9 99.2,740.2 102.3,740.5 105.4,740.8 108.4,741.2 111.2,741.4 114.0,741.7 116.6,742.0 120.4,742.4 124.1,742.8 127.8,743.1 131.4,743.5 135.0,743.9 138.6,744.3 142.1,744.6 145.5,745.0 148.9,745.3 152.2,745.7 155.5,746.0 158.7,746.3 161.9,746.6 165.0,747.0 168.0,747.3 171.0,747.6 173.9,747.9 176.7,748.2 179.4,748.4 182.1,748.7 184.7,749.0 187.3,749.3 189.7,749.5 192.1,749.8 194.4,750.0 199.0,750.5 202.7,750.9 205.8,751.3 208.3,751.7 210.6,752.0 212.8,752.3 215.0,752.6 217.7,752.9 220.8,753.2 224.6,753.5 229.4,753.8 231.6,753.9 234.0,754.1 236.4,754.3 239.0,754.4 241.7,754.6 244.5,754.8 247.3,755.0 250.3,755.2 253.3,755.4 256.4,755.6 259.5,755.8 262.7,756.0 265.9,756.1 269.2,756.3 272.4,756.5 275.7,756.7 279.0,756.8 282.4,757.0 285.7,757.1 289.0,757.2 292.2,757.4 295.5,757.5 298.7,757.5 301.8,757.6 305.0,757.7 308.0,757.7 311.0,757.7 314.2,757.7 317.3,757.7 320.3,757.6 323.3,757.5 326.3,757.4 329.3,757.3 332.2,757.2 335.1,757.1 338.0,756.9 340.9,756.8 343.8,756.6 346.7,756.4 349.7,756.3 352.6,756.1 355.6,755.9 358.7,755.7 361.7,755.5 364.9,755.3 368.1,755.0 371.3,754.8 374.6,754.6 378.0,754.4 381.5,754.2 385.1,754.0 388.8,753.8 391.4,753.7 394.1,753.5 396.9,753.4 399.7,753.3 402.5,753.2 405.4,753.0 408.4,752.9 411.4,752.8 414.4,752.7 417.4,752.5 420.5,752.4 423.7,752.3 426.8,752.2 430.0,752.0 433.2,751.9 436.4,751.8 439.6,751.6 442.8,751.5 446.0,751.4 449.2,751.2 452.4,751.1 455.6,750.9 458.8,750.7 462.0,750.6 465.1,750.4 468.3,750.2 471.4,750.0 474.5,749.8 477.5,749.6 480.5,749.4 483.5,749.2 486.5,749.0 489.3,748.8 492.2,748.5 495.0,748.3 497.7,748.0 501.2,747.6 504.6,747.3 508.0,746.9 511.4,746.5 514.8,746.0 518.1,745.6 521.4,745.1 524.7,744.7 527.9,744.2 531.1,743.7 534.3,743.2 537.5,742.7 540.6,742.2 543.7,741.7 546.8,741.2 549.8,740.6 552.8,740.1 555.7,739.6 558.7,739.0 561.5,738.5 564.4,738.0 567.2,737.5 570.0,736.9 572.7,736.4 575.4,735.9 578.0,735.4 580.6,734.9 583.2,734.4 587.1,733.6 590.8,732.9 594.3,732.1 597.7,731.4 601.0,730.6 604.2,729.9 607.3,729.1 610.3,728.4 613.3,727.6 616.2,726.9 619.1,726.1 622.0,725.3 624.9,724.6 627.8,723.8 630.8,723.1 633.8,722.3 636.8,721.6 640.0,720.8 643.0,720.1 646.0,719.4 649.0,718.7 651.9,718.0 654.8,717.4 657.8,716.7 660.7,716.0 663.6,715.4 666.6,714.7 669.6,714.0 672.6,713.3 675.6,712.6 678.7,711.9 681.8,711.2 685.0,710.4 688.2,709.6 691.5,708.8 694.9,707.9 698.3,707.0 701.1,706.3 703.8,705.5 706.6,704.8 709.3,704.1 712.1,703.3 714.9,702.6 717.7,701.8 720.5,701.1 723.3,700.3 726.2,699.5 729.1,698.7 732.1,697.9 735.1,697.0 738.1,696.1 741.2,695.2 744.4,694.3 747.6,693.4 750.9,692.4 754.3,691.4 757.7,690.3 761.2,689.3 764.8,688.1 768.4,687.0 772.2,685.8 774.8,685.0 777.4,684.1 780.1,683.3 782.9,682.4 785.7,681.5 788.6,680.5 791.6,679.6 794.6,678.6 797.6,677.6 800.6,676.6 803.8,675.6 806.9,674.6 810.0,673.5 813.2,672.5 816.4,671.4 819.6,670.3 822.9,669.2 826.1,668.2 829.4,667.1 832.6,666.0 835.8,664.9 839.0,663.8 842.3,662.7 845.4,661.6 848.6,660.5 851.8,659.4 854.9,658.3 858.0,657.2 861.0,656.1 864.0,655.0 867.0,654.0 869.9,652.9 872.8,651.9 875.6,650.8 878.3,649.8 881.0,648.8 884.5,647.5 887.9,646.2 891.1,644.8 894.3,643.5 897.5,642.2 900.5,641.0 903.5,639.7 906.5,638.4 909.4,637.1 912.2,635.9 915.1,634.6 917.9,633.3 920.7,632.0 923.5,630.8 926.3,629.5 929.1,628.2 931.9,627.0 934.7,625.7 937.6,624.4 940.5,623.1 943.5,621.8 946.5,620.5 949.6,619.2 952.7,617.8 956.0,616.5 959.3,615.2 962.7,613.8 965.4,612.7 968.1,611.7 970.9,610.6 973.7,609.5 976.6,608.4 979.5,607.3 982.4,606.2 985.4,605.1 988.4,604.0 991.4,602.9 994.4,601.8 997.5,600.7 1000.5,599.5 1003.6,598.4 1006.7,597.3 1009.9,596.1 1013.0,595.0 1016.1,593.9 1019.2,592.8 1022.4,591.6 1025.5,590.5 1028.6,589.4 1031.7,588.2 1034.8,587.1 1037.9,586.0 1041.0,584.9 1044.1,583.7 1047.1,582.6 1050.2,581.5 1053.2,580.4 1056.1,579.3 1059.1,578.2 1062.0,577.1 1064.9,576.1 1067.7,575.0 1071.0,573.8 1074.2,572.5 1077.4,571.3 1080.6,570.0 1083.8,568.7 1087.0,567.5 1090.1,566.2 1093.2,565.0 1096.3,563.7 1099.4,562.5 1102.5,561.2 1105.6,560.0 1108.6,558.7 1111.7,557.5 1114.7,556.3 1117.7,555.0 1120.7,553.8 1123.7,552.6 1126.8,551.4 1129.8,550.2 1132.8,549.1 1135.8,547.9 1138.8,546.8 1141.8,545.6 1144.8,544.5 1147.8,543.4 1150.9,542.3 1153.9,541.3 1156.9,540.2 1160.0,539.2 1163.1,538.2 1166.1,537.2 1169.2,536.3 1172.2,535.3 1175.3,534.4 1178.3,533.5 1181.3,532.7 1184.4,531.8 1187.4,531.0 1190.4,530.1 1193.5,529.3 1196.5,528.5 1199.5,527.7 1202.5,526.9 1205.6,526.1 1208.6,525.3 1211.6,524.6 1214.7,523.8 1217.7,523.0 1220.8,522.2 1223.8,521.4 1226.9,520.6 1229.9,519.8 1233.0,519.0 1236.1,518.2 1239.1,517.4 1242.2,516.5 1245.3,515.7 1248.4,514.8 1251.5,513.9 1254.5,513.0 1257.6,512.1 1260.6,511.2 1263.7,510.3 1266.9,509.4 1270.0,508.4 1273.1,507.5 1276.3,506.5 1279.5,505.5 1282.6,504.5 1285.8,503.6 1289.0,502.6 1292.2,501.6 1295.4,500.6 1298.5,499.6 1301.7,498.7 1304.8,497.7 1308.0,496.7 1311.1,495.7 1314.2,494.8 1317.3,493.8 1320.4,492.9 1323.4,491.9 1326.4,491.0 1329.4,490.1 1332.3,489.2 1335.3,488.3 1338.1,487.5 1341.0,486.6 1343.8,485.8 1346.5,485.0 1350.0,484.0 1353.4,483.0 1356.8,482.1 1360.1,481.2 1363.3,480.3 1366.5,479.4 1369.7,478.6 1372.8,477.7 1375.9,476.9 1378.9,476.1 1381.9,475.3 1384.9,474.5 1387.9,473.7 1390.9,473.0 1393.8,472.2 1396.7,471.4 1399.7,470.6 1402.6,469.8 1405.5,469.0 1408.4,468.1 1411.4,467.3 1414.3,466.4 1417.3,465.5 1420.3,464.6 1423.4,463.6 1426.6,462.6 1429.8,461.6 1433.0,460.5 1436.2,459.5 1439.5,458.4 1442.7,457.3 1445.9,456.3 1449.1,455.2 1452.3,454.1 1455.5,453.0 1458.6,451.8 1461.8,450.7 1464.9,449.6 1468.0,448.5 1471.0,447.4 1474.0,446.3 1476.9,445.3 1479.8,444.2 1482.6,443.1 1485.4,442.1 1488.1,441.0 1490.7,440.0 1494.3,438.6 1497.7,437.1 1500.9,435.8 1504.0,434.4 1506.9,433.0 1509.8,431.7 1512.6,430.4 1515.3,429.0 1518.1,427.7 1520.8,426.4 1523.6,425.0 1526.5,423.7 1529.5,422.3 1532.6,420.9 1535.9,419.5 1539.4,418.0 1542.1,416.9 1544.8,415.8 1547.6,414.7 1550.5,413.5 1553.5,412.3 1556.5,411.1 1559.5,409.9 1562.6,408.7 1565.7,407.5 1568.9,406.3 1572.0,405.1 1575.2,403.9 1578.4,402.7 1581.5,401.5 1584.7,400.3 1587.8,399.1 1590.8,398.0 1593.9,396.9 1596.8,395.8 1599.8,394.7 1602.6,393.7 1605.4,392.7 1608.8,391.5 1612.3,390.3 1615.8,389.1 1619.3,388.0 1622.9,386.8 1626.4,385.6 1629.9,384.5 1633.4,383.4 1636.8,382.4 1640.0,381.3 1643.2,380.4 1646.2,379.4 1649.0,378.6 1651.7,377.8 1654.1,377.0 1656.3,376.3 1658.2,375.7 1659.9,375.2" fill="none" stroke="#c02a2a" stroke-width="1" shape-rendering="crispEdges"/>
<polyline points="795.5,818.0 797.2,817.5 799.1,816.8 801.1,816.2 803.4,815.4 805.9,814.6 808.5,813.8 811.3,812.9 814.2,811.9 817.3,810.9 820.5,809.9 823.7,808.8 827.1,807.7 830.5,806.6 834.1,805.5 837.6,804.3 841.2,803.1 844.8,802.0 848.5,800.8 852.1,799.6 855.8,798.4 859.4,797.2 862.9,796.1 866.5,794.9 869.9,793.8 873.3,792.7 876.2,791.7 879.2,790.8 882.3,789.8 885.4,788.8 888.5,787.8 891.7,786.7 894.9,785.7 898.2,784.6 901.5,783.5 904.8,782.5 908.1,781.4 911.4,780.3 914.7,779.2 918.0,778.2 921.3,777.1 924.6,776.0 927.9,774.9 931.1,773.9 934.3,772.9 937.4,771.8 940.5,770.8 943.6,769.8 946.5,768.8 949.4,767.9 952.3,767.0 955.0,766.1 957.7,765.2 960.2,764.3 962.7,763.5 966.9,762.1 970.7,760.8 974.3,759.6 977.6,758.5 980.7,757.5 983.7,756.5 986.5,755.6 989.2,754.6 991.9,753.7 994.6,752.8 997.4,751.8 1000.2,750.8 1003.2,749.7 1006.3,748.6 1009.7,747.3 1013.3,746.0 1015.9,745.0 1018.7,744.0 1021.4,743.0 1024.2,742.0 1027.1,740.9 1030.0,739.9 1032.9,738.8 1035.9,737.7 1038.9,736.6 1042.0,735.5 1045.1,734.3 1048.2,733.1 1051.3,731.9 1054.4,730.7 1057.6,729.5 1060.8,728.2 1064.0,727.0 1067.2,725.7 1070.4,724.3 1073.6,723.0 1076.8,721.6 1080.0,720.2 1083.2,718.8 1086.1,717.5 1089.0,716.1 1092.0,714.6 1094.9,713.2 1097.8,711.7 1100.7,710.1 1103.6,708.6 1106.5,707.0 1109.4,705.4 1112.4,703.8 1115.3,702.1 1118.3,700.5 1121.3,698.9 1124.3,697.2 1127.4,695.6 1130.5,693.9 1133.6,692.3 1136.7,690.7 1139.9,689.1 1143.1,687.5 1146.4,685.9 1149.7,684.4 1153.1,682.9 1156.5,681.4 1160.0,680.0 1162.8,678.9 1165.6,677.8 1168.4,676.7 1171.3,675.7 1174.3,674.6 1177.3,673.6 1180.3,672.6 1183.3,671.5 1186.4,670.5 1189.5,669.5 1192.7,668.5 1195.8,667.5 1199.0,666.5 1202.2,665.5 1205.3,664.5 1208.5,663.6 1211.8,662.6 1215.0,661.6 1218.2,660.7 1221.4,659.7 1224.6,658.8 1227.8,657.8 1230.9,656.9 1234.1,655.9 1237.2,655.0 1240.4,654.0 1243.5,653.1 1246.5,652.1 1249.6,651.2 1252.6,650.2 1255.6,649.3 1258.5,648.3 1261.7,647.2 1265.0,646.2 1268.3,645.1 1271.7,643.9 1275.1,642.8 1278.5,641.7 1281.9,640.6 1285.3,639.4 1288.7,638.3 1292.1,637.2 1295.5,636.0 1298.8,634.9 1302.2,633.8 1305.5,632.7 1308.8,631.6 1312.0,630.5 1315.1,629.4 1318.2,628.4 1321.3,627.4 1324.2,626.4 1327.1,625.4 1329.9,624.4 1332.6,623.5 1335.2,622.6 1337.7,621.8 1340.1,620.9 1342.4,620.1 1344.5,619.4 1346.5,618.7 1352.3,616.7 1356.2,615.3 1358.6,614.5 1360.3,613.8 1361.8,613.2 1363.6,612.3 1366.5,611.0 1371.0,608.9 1373.2,607.9 1375.6,606.8 1378.1,605.7 1380.8,604.4 1383.6,603.1 1386.6,601.7 1389.6,600.3 1392.8,598.9 1396.0,597.3 1399.3,595.8 1402.6,594.2 1405.9,592.7 1409.3,591.1 1412.6,589.5 1415.9,587.9 1419.2,586.4 1422.4,584.8 1425.6,583.3 1428.6,581.8 1431.6,580.4 1434.4,579.0 1437.8,577.4 1441.1,575.8 1444.4,574.2 1447.6,572.7 1450.7,571.2 1453.8,569.7 1456.9,568.2 1459.9,566.7 1463.0,565.2 1466.0,563.7 1469.0,562.2 1472.0,560.6 1475.0,559.0 1478.0,557.3 1481.1,555.6 1484.1,553.8 1487.2,551.9 1490.4,549.9 1493.7,547.7 1497.1,545.5 1500.5,543.1 1504.0,540.6 1507.5,538.1 1511.1,535.5 1514.5,533.0 1517.9,530.4 1521.3,527.9 1524.5,525.5 1527.6,523.2 1530.5,521.0 1533.2,518.9 1535.7,517.1 1538.0,515.4 1540.0,513.9 1546.1,509.1 1547.5,507.7 1550.5,506.0 1552.5,504.9 1554.3,504.0 1556.1,503.1 1558.2,502.1 1560.9,500.9 1564.4,499.5 1569.1,497.8 1575.1,495.6 1577.2,494.9 1579.5,494.1 1582.0,493.2 1584.8,492.3 1587.7,491.3 1590.8,490.2 1594.0,489.1 1597.3,488.0 1600.8,486.9 1604.3,485.7 1607.9,484.5 1611.5,483.3 1615.2,482.1 1618.8,480.9 1622.5,479.6 1626.1,478.4 1629.7,477.3 1633.1,476.1 1636.5,475.0 1639.8,473.9 1642.9,472.9 1645.9,471.9 1648.7,471.0 1651.3,470.1 1653.8,469.3 1655.9,468.6 1657.9,467.9 1659.5,467.4" fill="none" stroke="#40c040" stroke-width="1" shape-rendering="crispEdges"/>
<polyline points="1168.0,818.0 1169.6,817.4 1171.4,816.7 1173.4,816.0 1175.6,815.2 1177.9,814.3 1180.3,813.3 1183.0,812.3 1185.7,811.3 1188.6,810.2 1191.6,809.1 1194.6,807.9 1197.8,806.7 1201.1,805.5 1204.4,804.3 1207.8,803.0 1211.2,801.7 1214.6,800.4 1218.1,799.1 1221.6,797.7 1225.2,796.4 1228.7,795.1 1232.2,793.8 1235.7,792.5 1239.1,791.2 1242.5,789.9 1245.9,788.7 1249.1,787.5 1252.4,786.3 1255.5,785.1 1258.5,784.0 1261.6,782.9 1264.8,781.7 1268.0,780.6 1271.2,779.4 1274.5,778.2 1277.8,777.0 1281.2,775.8 1284.5,774.7 1287.9,773.5 1291.2,772.3 1294.6,771.1 1297.9,769.9 1301.2,768.8 1304.5,767.6 1307.8,766.4 1311.0,765.3 1314.2,764.2 1317.4,763.1 1320.4,762.0 1323.4,760.9 1326.4,759.9 1329.2,758.8 1332.0,757.8 1334.7,756.8 1337.3,755.9 1339.8,755.0 1342.1,754.1 1344.4,753.2 1346.5,752.4 1351.6,750.5 1355.4,749.2 1358.0,748.3 1360.0,747.7 1361.6,747.2 1363.4,746.4 1365.5,745.2 1368.4,743.5 1372.5,740.9 1378.1,737.3 1380.2,735.9 1382.6,734.4 1385.1,732.7 1387.7,730.9 1390.6,729.0 1393.5,727.0 1396.6,724.9 1399.8,722.7 1403.1,720.4 1406.5,718.0 1410.0,715.6 1413.5,713.2 1417.1,710.7 1420.7,708.2 1424.4,705.6 1428.0,703.0 1431.6,700.5 1435.3,697.9 1438.8,695.4 1442.4,692.9 1445.9,690.5 1449.3,688.0 1452.6,685.7 1455.8,683.4 1459.0,681.2 1462.0,679.1 1464.8,677.0 1467.5,675.1 1470.1,673.3 1472.4,671.6 1474.6,670.1 1476.6,668.7 1483.5,663.9 1487.7,661.2 1489.9,659.7 1491.2,658.9 1492.4,657.9 1494.3,656.1 1497.7,652.8 1500.1,650.4 1502.9,647.6 1505.9,644.5 1509.1,641.2 1512.4,637.6 1515.8,634.0 1519.3,630.2 1522.7,626.5 1526.1,622.9 1529.4,619.4 1532.4,616.1 1535.3,613.1 1537.8,610.4 1540.0,608.2 1545.3,602.9 1548.3,600.1 1550.7,598.4 1554.0,596.5 1556.5,595.1 1559.1,593.9 1561.8,592.7 1564.7,591.6 1567.8,590.4 1571.3,589.2 1575.1,587.8 1577.7,586.9 1580.5,586.0 1583.3,585.1 1586.3,584.1 1589.4,583.2 1592.6,582.2 1595.9,581.2 1599.3,580.1 1602.9,579.0 1606.5,577.8 1610.3,576.5 1613.1,575.5 1616.1,574.5 1619.4,573.3 1622.8,572.1 1626.3,570.9 1629.9,569.6 1633.5,568.3 1637.1,567.0 1640.6,565.7 1644.0,564.5 1647.3,563.3 1650.3,562.2 1653.1,561.2 1655.6,560.3 1657.8,559.5 1659.5,558.9" fill="none" stroke="#1a1ab0" stroke-width="1" shape-rendering="crispEdges"/>
<polyline points="1434.0,818.0 1435.8,816.5 1437.9,814.8 1440.3,812.8 1442.9,810.7 1445.8,808.3 1449.0,805.8 1452.3,803.2 1455.7,800.4 1459.3,797.5 1462.9,794.5 1466.6,791.4 1470.2,788.2 1473.9,785.0 1477.5,781.8 1481.0,778.6 1484.4,775.3 1487.7,772.2 1490.7,769.0 1494.1,765.3 1497.5,761.4 1501.0,757.3 1504.5,753.0 1508.0,748.6 1511.4,744.1 1514.9,739.6 1518.2,735.1 1521.5,730.7 1524.7,726.4 1527.7,722.3 1530.6,718.3 1533.3,714.6 1535.7,711.3 1538.0,708.2 1540.0,705.6 1545.7,697.3 1547.1,694.4 1550.5,691.5 1552.8,689.8 1555.4,688.1 1558.2,686.4 1561.2,684.7 1564.4,682.9 1567.8,681.2 1571.3,679.5 1574.9,677.9 1578.6,676.4 1581.4,675.3 1584.4,674.3 1587.4,673.4 1590.6,672.5 1593.8,671.7 1597.1,670.8 1600.4,669.9 1603.7,669.1 1607.1,668.1 1610.5,667.2 1613.9,666.1 1617.3,665.0 1620.3,663.9 1623.5,662.7 1626.9,661.5 1630.3,660.1 1633.8,658.7 1637.4,657.3 1640.8,655.9 1644.2,654.6 1647.4,653.2 1650.4,652.0 1653.2,650.9 1655.7,649.9 1657.8,649.0 1659.5,648.3" fill="none" stroke="#c02a2a" stroke-width="1" shape-rendering="crispEdges"/>
<rect x="4" y="706" width="1" height="15" fill="#3edb3e"/>
<rect x="2.5" y="710.5" width="4" height="5" fill="#000000" stroke="#3edb3e" stroke-width="1"/>
<rect x="12" y="687" width="1" height="24" fill="#3edb3e"/>
<rect x="10.5" y="693.5" width="4" height="17" fill="#000000" stroke="#3edb3e" stroke-width="1"/>
<rect x="20" y="693" width="1" height="14" fill="#3edb3e"/>
<rect x="18.5" y="693.5" width="4" height="9" fill="#ffffff" stroke="#3edb3e" stroke-width="1"/>
<rect x="28" y="682" width="1" height="41" fill="#3edb3e"/>
<rect x="26.5" y="702.5" width="4" height="16" fill="#ffffff" stroke="#3edb3e" stroke-width="1"/>
<rect x="36" y="708" width="1" height="17" fill="#3edb3e"/>
<rect x="34.5" y="716.5" width="4" height="2" fill="#000000" stroke="#3edb3e" stroke-width="1"/>
<rect x="44" y="699" width="1" height="25" fill="#3edb3e"/>
<rect x="42.5" y="699.5" width="4" height="19" fill="#000000" stroke="#3edb3e" stroke-width="1"/>
<rect x="52" y="690" width="1" height="15" fill="#3edb3e"/>
<rect x="50.5" y="695.5" width="4" height="5" fill="#000000" stroke="#3edb3e" stroke-width="1"/>
<rect x="60" y="694" width="1" height="11" fill="#3edb3e"/>
<rect x="58.5" y="696.5" width="4" height="3" fill="#ffffff" stroke="#3edb3e" stroke-width="1"/>
<rect x="68" y="692" width="1" height="13" fill="#3edb3e"/>
<rect x="66.5" y="699.5" width="4" height="2" fill="#000000" stroke="#3edb3e" stroke-width="1"/>
<rect x="76" y="689" width="1" height="20" fill="#3edb3e"/>
<rect x="74.5" y="700.5" width="4" height="7" fill="#ffffff" stroke="#3edb3e" stroke-width="1"/>
<rect x="84" y="693" width="1" height="32" fill="#3edb3e"/>
<rect x="82.5" y="700.5" width="4" height="9" fill="#000000" stroke="#3edb3e" stroke-width="1"/>
<rect x="92" y="675" width="1" height="36" fill="#3edb3e"/>
<rect x="90.5" y="688.5" width="4" height="13" fill="#000000" stroke="#3edb3e" stroke-width="1"/>
<rect x="100" y="679" width="1" height="19" fill="#3edb3e"/>
<rect x="98.5" y="689.5" width="4" height="8" fill="#ffffff" stroke="#3edb3e" stroke-width="1"/>
<rect x="108" y="688" width="1" height="19" fill="#3edb3e"/>
<rect x="106.5" y="697.5" width="4" height="3" fill="#ffffff" stroke="#3edb3e" stroke-width="1"/>
<rect x="116" y="693" width="1" height="25" fill="#3edb3e"/>
<rect x="114.5" y="700.5" width="4" height="13" fill="#ffffff" stroke="#3edb3e" stroke-width="1"/>
<rect x="124" y="677" width="1" height="84" fill="#3edb3e"/>
<rect x="122.5" y="712.5" width="4" height="13" fill="#ffffff" stroke="#3edb3e" stroke-width="1"/>
<rect x="132" y="725" width="1" height="57" fill="#3edb3e"/>
<rect x="130.5" y="727.5" width="4" height="1" fill="#000000" stroke="#3edb3e" stroke-width="1"/>
<rect x="140" y="728" width="1" height="43" fill="#3edb3e"/>
<rect x="138.5" y="728.5" width="4" height="28" fill="#ffffff" stroke="#3edb3e" stroke-width="1"/>
<rect x="148" y="749" width="1" height="17" fill="#3edb3e"/>
<rect x="146" y="756" width="5" height="1" fill="#3edb3e"/>
<rect x="156" y="746" width="1" height="15" fill="#3edb3e"/>
<rect x="154.5" y="750.5" width="4" height="6" fill="#000000" stroke="#3edb3e" stroke-width="1"/>
<rect x="164" y="743" width="1" height="11" fill="#3edb3e"/>
<rect x="162.5" y="743.5" width="4" height="7" fill="#000000" stroke="#3edb3e" stroke-width="1"/>
<rect x="172" y="741" width="1" height="13" fill="#3edb3e"/>
<rect x="170.5" y="744.5" width="4" height="1" fill="#000000" stroke="#3edb3e" stroke-width="1"/>
<rect x="180" y="741" width="1" height="11" fill="#3edb3e"/>
<rect x="178.5" y="745.5" width="4" height="5" fill="#ffffff" stroke="#3edb3e" stroke-width="1"/>
<rect x="188" y="741" width="1" height="24" fill="#3edb3e"/>
<rect x="186.5" y="748.5" width="4" height="4" fill="#ffffff" stroke="#3edb3e" stroke-width="1"/>
<rect x="196" y="755" width="1" height="16" fill="#3edb3e"/>
<rect x="194.5" y="759.5" width="4" height="3" fill="#ffffff" stroke="#3edb3e" stroke-width="1"/>
<rect x="204" y="731" width="1" height="40" fill="#3edb3e"/>
<rect x="202.5" y="744.5" width="4" height="25" fill="#000000" stroke="#3edb3e" stroke-width="1"/>
<rect x="212" y="728" width="1" height="27" fill="#3edb3e"/>
<rect x="210.5" y="728.5" width="4" height="14" fill="#000000" stroke="#3edb3e" stroke-width="1"/>
<rect x="220" y="728" width="1" height="19" fill="#3edb3e"/>
<rect x="218.5" y="730.5" width="4" height="6" fill="#ffffff" stroke="#3edb3e" stroke-width="1"/>
<rect x="228" y="716" width="1" height="24" fill="#3edb3e"/>
<rect x="226.5" y="722.5" width="4" height="16" fill="#000000" stroke="#3edb3e" stroke-width="1"/>
<rect x="236" y="722" width="1" height="12" fill="#3edb3e"/>
<rect x="234.5" y="722.5" width="4" height="10" fill="#ffffff" stroke="#3edb3e" stroke-width="1"/>
<rect x="244" y="720" width="1" height="18" fill="#3edb3e"/>
<rect x="242.5" y="721.5" width="4" height="11" fill="#000000" stroke="#3edb3e" stroke-width="1"/>
<rect x="252" y="720" width="1" height="34" fill="#3edb3e"/>
<rect x="250.5" y="721.5" width="4" height="32" fill="#ffffff" stroke="#3edb3e" stroke-width="1"/>
<rect x="260" y="748" width="1" height="37" fill="#3edb3e"/>
<rect x="258.5" y="753.5" width="4" height="27" fill="#ffffff" stroke="#3edb3e" stroke-width="1"/>
<rect x="268" y="767" width="1" height="22" fill="#3edb3e"/>
<rect x="266.5" y="779.5" width="4" height="2" fill="#ffffff" stroke="#3edb3e" stroke-width="1"/>
<rect x="276" y="770" width="1" height="32" fill="#3edb3e"/>
<rect x="274.5" y="781.5" width="4" height="18" fill="#ffffff" stroke="#3edb3e" stroke-width="1"/>
<rect x="284" y="756" width="1" height="49" fill="#3edb3e"/>
<rect x="282.5" y="786.5" width="4" height="13" fill="#000000" stroke="#3edb3e" stroke-width="1"/>
<rect x="292" y="780" width="1" height="25" fill="#3edb3e"/>
<rect x="290.5" y="785.5" width="4" height="19" fill="#ffffff" stroke="#3edb3e" stroke-width="1"/>
<rect x="300" y="775" width="1" height="38" fill="#3edb3e"/>
<rect x="298.5" y="780.5" width="4" height="23" fill="#000000" stroke="#3edb3e" stroke-width="1"/>
<rect x="308" y="752" width="1" height="31" fill="#3edb3e"/>
<rect x="306.5" y="753.5" width="4" height="27" fill="#000000" stroke="#3edb3e" stroke-width="1"/>
<rect x="316" y="691" width="1" height="71" fill="#3edb3e"/>
<rect x="314.5" y="697.5" width="4" height="57" fill="#000000" stroke="#3edb3e" stroke-width="1"/>
<rect x="324" y="631" width="1" height="69" fill="#3edb3e"/>
<rect x="322.5" y="646.5" width="4" height="51" fill="#000000" stroke="#3edb3e" stroke-width="1"/>
<rect x="332" y="597" width="1" height="52" fill="#3edb3e"/>
<rect x="330.5" y="641.5" width="4" height="6" fill="#000000" stroke="#3edb3e" stroke-width="1"/>
<rect x="340" y="601" width="1" height="51" fill="#3edb3e"/>
<rect x="338.5" y="611.5" width="4" height="30" fill="#000000" stroke="#3edb3e" stroke-width="1"/>
<rect x="348" y="592" width="1" height="21" fill="#3edb3e"/>
<rect x="346.5" y="593.5" width="4" height="19" fill="#000000" stroke="#3edb3e" stroke-width="1"/>
<rect x="356" y="584" width="1" height="22" fill="#3edb3e"/>
<rect x="354.5" y="594.5" width="4" height="9" fill="#ffffff" stroke="#3edb3e" stroke-width="1"/>
<rect x="364" y="602" width="1" height="11" fill="#3edb3e"/>
<rect x="362.5" y="603.5" width="4" height="6" fill="#ffffff" stroke="#3edb3e" stroke-width="1"/>
<rect x="372" y="599" width="1" height="19" fill="#3edb3e"/>
<rect x="370.5" y="601.5" width="4" height="7" fill="#000000" stroke="#3edb3e" stroke-width="1"/>
<rect x="380" y="602" width="1" height="11" fill="#3edb3e"/>
<rect x="378.5" y="602.5" width="4" height="4" fill="#ffffff" stroke="#3edb3e" stroke-width="1"/>
<rect x="388" y="602" width="1" height="16" fill="#3edb3e"/>
<rect x="386.5" y="602.5" width="4" height="4" fill="#000000" stroke="#3edb3e" stroke-width="1"/>
<rect x="396" y="596" width="1" height="11" fill="#3edb3e"/>
<rect x="394.5" y="598.5" width="4" height="4" fill="#000000" stroke="#3edb3e" stroke-width="1"/>
<rect x="404" y="590" width="1" height="10" fill="#3edb3e"/>
<rect x="402.5" y="590.5" width="4" height="9" fill="#000000" stroke="#3edb3e" stroke-width="1"/>
<rect x="412" y="577" width="1" height="24" fill="#3edb3e"/>
<rect x="410.5" y="591.5" width="4" height="9" fill="#ffffff" stroke="#3edb3e" stroke-width="1"/>
<rect x="420" y="590" width="1" height="25" fill="#3edb3e"/>
<rect x="418.5" y="600.5" width="4" height="9" fill="#ffffff" stroke="#3edb3e" stroke-width="1"/>
<rect x="428" y="606" width="1" height="25" fill="#3edb3e"/>
<rect x="426.5" y="608.5" width="4" height="9" fill="#ffffff" stroke="#3edb3e" stroke-width="1"/>
<rect x="436" y="616" width="1" height="25" fill="#3edb3e"/>
<rect x="434.5" y="617.5" width="4" height="14" fill="#ffffff" stroke="#3edb3e" stroke-width="1"/>
<rect x="444" y="611" width="1" height="24" fill="#3edb3e"/>
<rect x="442.5" y="623.5" width="4" height="8" fill="#000000" stroke="#3edb3e" stroke-width="1"/>
<rect x="452" y="604" width="1" height="21" fill="#3edb3e"/>
<rect x="450.5" y="604.5" width="4" height="19" fill="#000000" stroke="#3edb3e" stroke-width="1"/>
<rect x="460" y="592" width="1" height="41" fill="#3edb3e"/>
<rect x="458.5" y="608.5" width="4" height="19" fill="#ffffff" stroke="#3edb3e" stroke-width="1"/>
<rect x="468" y="580" width="1" height="68" fill="#3edb3e"/>
<rect x="466.5" y="580.5" width="4" height="47" fill="#000000" stroke="#3edb3e" stroke-width="1"/>
<rect x="476" y="582" width="1" height="71" fill="#3edb3e"/>
<rect x="474.5" y="583.5" width="4" height="18" fill="#ffffff" stroke="#3edb3e" stroke-width="1"/>
<rect x="484" y="577" width="1" height="45" fill="#3edb3e"/>
<rect x="482.5" y="598.5" width="4" height="5" fill="#ffffff" stroke="#3edb3e" stroke-width="1"/>
<rect x="492" y="586" width="1" height="47" fill="#3edb3e"/>
<rect x="490.5" y="603.5" width="4" height="13" fill="#ffffff" stroke="#3edb3e" stroke-width="1"/>
<rect x="500" y="612" width="1" height="21" fill="#3edb3e"/>
<rect x="498.5" y="616.5" width="4" height="8" fill="#ffffff" stroke="#3edb3e" stroke-width="1"/>
<rect x="508" y="545" width="1" height="84" fill="#3edb3e"/>
<rect x="506.5" y="558.5" width="4" height="66" fill="#000000" stroke="#3edb3e" stroke-width="1"/>
<rect x="516" y="527" width="1" height="41" fill="#3edb3e"/>
<rect x="514.5" y="528.5" width="4" height="31" fill="#000000" stroke="#3edb3e" stroke-width="1"/>
<rect x="524" y="510" width="1" height="30" fill="#3edb3e"/>
<rect x="522.5" y="529.5" width="4" height="3" fill="#ffffff" stroke="#3edb3e" stroke-width="1"/>
<rect x="532" y="489" width="1" height="47" fill="#3edb3e"/>
<rect x="530.5" y="496.5" width="4" height="36" fill="#000000" stroke="#3edb3e" stroke-width="1"/>
<rect x="540" y="482" width="1" height="29" fill="#3edb3e"/>
<rect x="538.5" y="483.5" width="4" height="13" fill="#000000" stroke="#3edb3e" stroke-width="1"/>
<rect x="548" y="470" width="1" height="25" fill="#3edb3e"/>
<rect x="546.5" y="484.5" width="4" height="1" fill="#000000" stroke="#3edb3e" stroke-width="1"/>
<rect x="556" y="431" width="1" height="58" fill="#3edb3e"/>
<rect x="554.5" y="440.5" width="4" height="44" fill="#000000" stroke="#3edb3e" stroke-width="1"/>
<rect x="564" y="432" width="1" height="21" fill="#3edb3e"/>
<rect x="562.5" y="432.5" width="4" height="8" fill="#000000" stroke="#3edb3e" stroke-width="1"/>
<rect x="572" y="421" width="1" height="17" fill="#3edb3e"/>
<rect x="570.5" y="433.5" width="4" height="2" fill="#ffffff" stroke="#3edb3e" stroke-width="1"/>
<rect x="580" y="426" width="1" height="19" fill="#3edb3e"/>
<rect x="578.5" y="435.5" width="4" height="3" fill="#ffffff" stroke="#3edb3e" stroke-width="1"/>
<rect x="588" y="430" width="1" height="13" fill="#3edb3e"/>
<rect x="586.5" y="438.5" width="4" height="2" fill="#ffffff" stroke="#3edb3e" stroke-width="1"/>
<rect x="596" y="431" width="1" height="12" fill="#3edb3e"/>
<rect x="594.5" y="433.5" width="4" height="7" fill="#000000" stroke="#3edb3e" stroke-width="1"/>
<rect x="604" y="428" width="1" height="21" fill="#3edb3e"/>
<rect x="602.5" y="433.5" width="4" height="5" fill="#ffffff" stroke="#3edb3e" stroke-width="1"/>
<rect x="612" y="421" width="1" height="20" fill="#3edb3e"/>
<rect x="610.5" y="434.5" width="4" height="4" fill="#000000" stroke="#3edb3e" stroke-width="1"/>
<rect x="620" y="429" width="1" height="28" fill="#3edb3e"/>
<rect x="618.5" y="434.5" width="4" height="18" fill="#ffffff" stroke="#3edb3e" stroke-width="1"/>
<rect x="628" y="445" width="1" height="12" fill="#3edb3e"/>
<rect x="626" y="452" width="5" height="1" fill="#3edb3e"/>
<rect x="636" y="438" width="1" height="16" fill="#3edb3e"/>
<rect x="634.5" y="441.5" width="4" height="12" fill="#000000" stroke="#3edb3e" stroke-width="1"/>
<rect x="644" y="429" width="1" height="18" fill="#3edb3e"/>
<rect x="642.5" y="431.5" width="4" height="11" fill="#000000" stroke="#3edb3e" stroke-width="1"/>
<rect x="652" y="410" width="1" height="52" fill="#3edb3e"/>
<rect x="650.5" y="431.5" width="4" height="13" fill="#ffffff" stroke="#3edb3e" stroke-width="1"/>
<rect x="660" y="410" width="1" height="48" fill="#3edb3e"/>
<rect x="658.5" y="418.5" width="4" height="24" fill="#000000" stroke="#3edb3e" stroke-width="1"/>
<rect x="668" y="395" width="1" height="62" fill="#3edb3e"/>
<rect x="666.5" y="398.5" width="4" height="23" fill="#000000" stroke="#3edb3e" stroke-width="1"/>
<rect x="676" y="389" width="1" height="35" fill="#3edb3e"/>
<rect x="674.5" y="398.5" width="4" height="5" fill="#ffffff" stroke="#3edb3e" stroke-width="1"/>
<rect x="684" y="364" width="1" height="44" fill="#3edb3e"/>
<rect x="682.5" y="381.5" width="4" height="22" fill="#000000" stroke="#3edb3e" stroke-width="1"/>
<rect x="692" y="368" width="1" height="29" fill="#3edb3e"/>
<rect x="690.5" y="381.5" width="4" height="8" fill="#ffffff" stroke="#3edb3e" stroke-width="1"/>
<rect x="700" y="389" width="1" height="37" fill="#3edb3e"/>
<rect x="698.5" y="389.5" width="4" height="14" fill="#ffffff" stroke="#3edb3e" stroke-width="1"/>
<rect x="708" y="365" width="1" height="44" fill="#3edb3e"/>
<rect x="706.5" y="383.5" width="4" height="20" fill="#000000" stroke="#3edb3e" stroke-width="1"/>
<rect x="716" y="319" width="1" height="76" fill="#3edb3e"/>
<rect x="714.5" y="358.5" width="4" height="24" fill="#000000" stroke="#3edb3e" stroke-width="1"/>
<rect x="724" y="350" width="1" height="47" fill="#3edb3e"/>
<rect x="722.5" y="358.5" width="4" height="32" fill="#ffffff" stroke="#3edb3e" stroke-width="1"/>
<rect x="732" y="387" width="1" height="24" fill="#3edb3e"/>
<rect x="730.5" y="390.5" width="4" height="20" fill="#ffffff" stroke="#3edb3e" stroke-width="1"/>
<rect x="740" y="397" width="1" height="19" fill="#3edb3e"/>
<rect x="738.5" y="408.5" width="4" height="2" fill="#000000" stroke="#3edb3e" stroke-width="1"/>
<rect x="748" y="400" width="1" height="59" fill="#3edb3e"/>
<rect x="746.5" y="407.5" width="4" height="49" fill="#ffffff" stroke="#3edb3e" stroke-width="1"/>
<rect x="756" y="436" width="1" height="34" fill="#3edb3e"/>
<rect x="754.5" y="436.5" width="4" height="20" fill="#000000" stroke="#3edb3e" stroke-width="1"/>
<rect x="764" y="430" width="1" height="35" fill="#3edb3e"/>
<rect x="762.5" y="438.5" width="4" height="26" fill="#ffffff" stroke="#3edb3e" stroke-width="1"/>
<rect x="772" y="445" width="1" height="23" fill="#3edb3e"/>
<rect x="770.5" y="445.5" width="4" height="19" fill="#000000" stroke="#3edb3e" stroke-width="1"/>
<rect x="780" y="434" width="1" height="14" fill="#3edb3e"/>
<rect x="778.5" y="442.5" width="4" height="4" fill="#000000" stroke="#3edb3e" stroke-width="1"/>
<rect x="788" y="434" width="1" height="17" fill="#3edb3e"/>
<rect x="786.5" y="436.5" width="4" height="8" fill="#000000" stroke="#3edb3e" stroke-width="1"/>
<rect x="796" y="433" width="1" height="25" fill="#3edb3e"/>
<rect x="794.5" y="436.5" width="4" height="17" fill="#ffffff" stroke="#3edb3e" stroke-width="1"/>
<rect x="804" y="446" width="1" height="25" fill="#3edb3e"/>
<rect x="802.5" y="452.5" width="4" height="2" fill="#000000" stroke="#3edb3e" stroke-width="1"/>
<rect x="812" y="443" width="1" height="22" fill="#3edb3e"/>
<rect x="810.5" y="443.5" width="4" height="10" fill="#000000" stroke="#3edb3e" stroke-width="1"/>
<rect x="820" y="432" width="1" height="13" fill="#3edb3e"/>
<rect x="818.5" y="441.5" width="4" height="3" fill="#000000" stroke="#3edb3e" stroke-width="1"/>
<rect x="828" y="435" width="1" height="11" fill="#3edb3e"/>
<rect x="826.5" y="435.5" width="4" height="5" fill="#000000" stroke="#3edb3e" stroke-width="1"/>
<rect x="836" y="412" width="1" height="25" fill="#3edb3e"/>
<rect x="834.5" y="434.5" width="4" height="2" fill="#000000" stroke="#3edb3e" stroke-width="1"/>
<rect x="844" y="411" width="1" height="41" fill="#3edb3e"/>
<rect x="842.5" y="411.5" width="4" height="23" fill="#000000" stroke="#3edb3e" stroke-width="1"/>
<rect x="852" y="380" width="1" height="46" fill="#3edb3e"/>
<rect x="850.5" y="404.5" width="4" height="8" fill="#000000" stroke="#3edb3e" stroke-width="1"/>
<rect x="860" y="404" width="1" height="27" fill="#3edb3e"/>
<rect x="858.5" y="405.5" width="4" height="7" fill="#ffffff" stroke="#3edb3e" stroke-width="1"/>
<rect x="868" y="411" width="1" height="48" fill="#3edb3e"/>
<rect x="866.5" y="411.5" width="4" height="47" fill="#ffffff" stroke="#3edb3e" stroke-width="1"/>
<rect x="876" y="446" width="1" height="21" fill="#3edb3e"/>
<rect x="874.5" y="458.5" width="4" height="8" fill="#ffffff" stroke="#3edb3e" stroke-width="1"/>
<rect x="884" y="403" width="1" height="65" fill="#3edb3e"/>
<rect x="882.5" y="416.5" width="4" height="51" fill="#000000" stroke="#3edb3e" stroke-width="1"/>
<rect x="892" y="374" width="1" height="67" fill="#3edb3e"/>
<rect x="890.5" y="380.5" width="4" height="37" fill="#000000" stroke="#3edb3e" stroke-width="1"/>
<rect x="900" y="331" width="1" height="77" fill="#3edb3e"/>
<rect x="898.5" y="368.5" width="4" height="13" fill="#000000" stroke="#3edb3e" stroke-width="1"/>
<rect x="908" y="338" width="1" height="41" fill="#3edb3e"/>
<rect x="906.5" y="363.5" width="4" height="6" fill="#000000" stroke="#3edb3e" stroke-width="1"/>
<rect x="916" y="336" width="1" height="29" fill="#3edb3e"/>
<rect x="914.5" y="349.5" width="4" height="13" fill="#000000" stroke="#3edb3e" stroke-width="1"/>
<rect x="924" y="284" width="1" height="67" fill="#3edb3e"/>
<rect x="922.5" y="300.5" width="4" height="49" fill="#000000" stroke="#3edb3e" stroke-width="1"/>
<rect x="932" y="295" width="1" height="18" fill="#3edb3e"/>
<rect x="930.5" y="300.5" width="4" height="9" fill="#ffffff" stroke="#3edb3e" stroke-width="1"/>
<rect x="940" y="309" width="1" height="14" fill="#3edb3e"/>
<rect x="938.5" y="309.5" width="4" height="3" fill="#ffffff" stroke="#3edb3e" stroke-width="1"/>
<rect x="948" y="311" width="1" height="16" fill="#3edb3e"/>
<rect x="946.5" y="312.5" width="4" height="10" fill="#ffffff" stroke="#3edb3e" stroke-width="1"/>
<rect x="956" y="311" width="1" height="24" fill="#3edb3e"/>
<rect x="954.5" y="322.5" width="4" height="11" fill="#ffffff" stroke="#3edb3e" stroke-width="1"/>
<rect x="964" y="307" width="1" height="28" fill="#3edb3e"/>
<rect x="962.5" y="317.5" width="4" height="16" fill="#000000" stroke="#3edb3e" stroke-width="1"/>
<rect x="972" y="314" width="1" height="17" fill="#3edb3e"/>
<rect x="970" y="318" width="5" height="1" fill="#3edb3e"/>
<rect x="980" y="309" width="1" height="15" fill="#3edb3e"/>
<rect x="978" y="318" width="5" height="1" fill="#3edb3e"/>
<rect x="988" y="304" width="1" height="18" fill="#3edb3e"/>
<rect x="986.5" y="307.5" width="4" height="10" fill="#000000" stroke="#3edb3e" stroke-width="1"/>
<rect x="996" y="304" width="1" height="38" fill="#3edb3e"/>
<rect x="994.5" y="306.5" width="4" height="24" fill="#ffffff" stroke="#3edb3e" stroke-width="1"/>
<rect x="1004" y="331" width="1" height="18" fill="#3edb3e"/>
<rect x="1002.5" y="332.5" width="4" height="12" fill="#ffffff" stroke="#3edb3e" stroke-width="1"/>
<rect x="1012" y="337" width="1" height="16" fill="#3edb3e"/>
<rect x="1010.5" y="341.5" width="4" height="3" fill="#000000" stroke="#3edb3e" stroke-width="1"/>
<rect x="1020" y="340" width="1" height="11" fill="#3edb3e"/>
<rect x="1018.5" y="341.5" width="4" height="7" fill="#ffffff" stroke="#3edb3e" stroke-width="1"/>
<rect x="1028" y="347" width="1" height="35" fill="#3edb3e"/>
<rect x="1026.5" y="348.5" width="4" height="32" fill="#ffffff" stroke="#3edb3e" stroke-width="1"/>
<rect x="1036" y="362" width="1" height="42" fill="#3edb3e"/>
<rect x="1034.5" y="379.5" width="4" height="6" fill="#ffffff" stroke="#3edb3e" stroke-width="1"/>
<rect x="1044" y="363" width="1" height="34" fill="#3edb3e"/>
<rect x="1042.5" y="363.5" width="4" height="22" fill="#000000" stroke="#3edb3e" stroke-width="1"/>
<rect x="1052" y="362" width="1" height="45" fill="#3edb3e"/>
<rect x="1050.5" y="365.5" width="4" height="34" fill="#ffffff" stroke="#3edb3e" stroke-width="1"/>
<rect x="1060" y="373" width="1" height="30" fill="#3edb3e"/>
<rect x="1058.5" y="382.5" width="4" height="17" fill="#000000" stroke="#3edb3e" stroke-width="1"/>
<rect x="1068" y="373" width="1" height="38" fill="#3edb3e"/>
<rect x="1066.5" y="382.5" width="4" height="24" fill="#ffffff" stroke="#3edb3e" stroke-width="1"/>
<rect x="1076" y="359" width="1" height="53" fill="#3edb3e"/>
<rect x="1074.5" y="373.5" width="4" height="33" fill="#000000" stroke="#3edb3e" stroke-width="1"/>
<rect x="1084" y="371" width="1" height="82" fill="#3edb3e"/>
<rect x="1082.5" y="372.5" width="4" height="54" fill="#ffffff" stroke="#3edb3e" stroke-width="1"/>
<rect x="1092" y="389" width="1" height="54" fill="#3edb3e"/>
<rect x="1090.5" y="404.5" width="4" height="22" fill="#000000" stroke="#3edb3e" stroke-width="1"/>
<rect x="1100" y="365" width="1" height="46" fill="#3edb3e"/>
<rect x="1098.5" y="390.5" width="4" height="15" fill="#000000" stroke="#3edb3e" stroke-width="1"/>
<rect x="1108" y="370" width="1" height="40" fill="#3edb3e"/>
<rect x="1106.5" y="370.5" width="4" height="20" fill="#000000" stroke="#3edb3e" stroke-width="1"/>
<rect x="1116" y="350" width="1" height="31" fill="#3edb3e"/>
<rect x="1114.5" y="359.5" width="4" height="11" fill="#000000" stroke="#3edb3e" stroke-width="1"/>
<rect x="1124" y="331" width="1" height="30" fill="#3edb3e"/>
<rect x="1122.5" y="342.5" width="4" height="18" fill="#000000" stroke="#3edb3e" stroke-width="1"/>
<rect x="1132" y="341" width="1" height="19" fill="#3edb3e"/>
<rect x="1130.5" y="342.5" width="4" height="12" fill="#ffffff" stroke="#3edb3e" stroke-width="1"/>
<rect x="1140" y="343" width="1" height="12" fill="#3edb3e"/>
<rect x="1138.5" y="350.5" width="4" height="4" fill="#000000" stroke="#3edb3e" stroke-width="1"/>
<rect x="1148" y="346" width="1" height="13" fill="#3edb3e"/>
<rect x="1146.5" y="350.5" width="4" height="4" fill="#ffffff" stroke="#3edb3e" stroke-width="1"/>
<rect x="1156" y="349" width="1" height="52" fill="#3edb3e"/>
<rect x="1154.5" y="365.5" width="4" height="34" fill="#000000" stroke="#3edb3e" stroke-width="1"/>
<rect x="1164" y="355" width="1" height="20" fill="#3edb3e"/>
<rect x="1162.5" y="366.5" width="4" height="1" fill="#ffffff" stroke="#3edb3e" stroke-width="1"/>
<rect x="1172" y="350" width="1" height="22" fill="#3edb3e"/>
<rect x="1170.5" y="363.5" width="4" height="8" fill="#ffffff" stroke="#3edb3e" stroke-width="1"/>
<rect x="1180" y="351" width="1" height="26" fill="#3edb3e"/>
<rect x="1178.5" y="367.5" width="4" height="4" fill="#000000" stroke="#3edb3e" stroke-width="1"/>
<rect x="1188" y="364" width="1" height="35" fill="#3edb3e"/>
<rect x="1186.5" y="366.5" width="4" height="24" fill="#ffffff" stroke="#3edb3e" stroke-width="1"/>
<rect x="1196" y="388" width="1" height="13" fill="#3edb3e"/>
<rect x="1194.5" y="388.5" width="4" height="2" fill="#000000" stroke="#3edb3e" stroke-width="1"/>
<rect x="1204" y="379" width="1" height="17" fill="#3edb3e"/>
<rect x="1202.5" y="380.5" width="4" height="8" fill="#000000" stroke="#3edb3e" stroke-width="1"/>
<rect x="1212" y="380" width="1" height="16" fill="#3edb3e"/>
<rect x="1210.5" y="380.5" width="4" height="13" fill="#ffffff" stroke="#3edb3e" stroke-width="1"/>
<rect x="1220" y="384" width="1" height="21" fill="#3edb3e"/>
<rect x="1218.5" y="390.5" width="4" height="3" fill="#000000" stroke="#3edb3e" stroke-width="1"/>
<rect x="1228" y="376" width="1" height="25" fill="#3edb3e"/>
<rect x="1226.5" y="390.5" width="4" height="10" fill="#ffffff" stroke="#3edb3e" stroke-width="1"/>
<rect x="1236" y="393" width="1" height="47" fill="#3edb3e"/>
<rect x="1234.5" y="400.5" width="4" height="34" fill="#ffffff" stroke="#3edb3e" stroke-width="1"/>
<rect x="1244" y="395" width="1" height="42" fill="#3edb3e"/>
<rect x="1242.5" y="406.5" width="4" height="28" fill="#000000" stroke="#3edb3e" stroke-width="1"/>
<rect x="1252" y="335" width="1" height="72" fill="#3edb3e"/>
<rect x="1250.5" y="349.5" width="4" height="57" fill="#000000" stroke="#3edb3e" stroke-width="1"/>
<rect x="1260" y="309" width="1" height="51" fill="#3edb3e"/>
<rect x="1258.5" y="332.5" width="4" height="17" fill="#000000" stroke="#3edb3e" stroke-width="1"/>
<rect x="1268" y="317" width="1" height="27" fill="#3edb3e"/>
<rect x="1266.5" y="332.5" width="4" height="10" fill="#ffffff" stroke="#3edb3e" stroke-width="1"/>
<rect x="1276" y="309" width="1" height="44" fill="#3edb3e"/>
<rect x="1274.5" y="320.5" width="4" height="22" fill="#000000" stroke="#3edb3e" stroke-width="1"/>
<rect x="1284" y="313" width="1" height="38" fill="#3edb3e"/>
<rect x="1282.5" y="320.5" width="4" height="24" fill="#ffffff" stroke="#3edb3e" stroke-width="1"/>
<rect x="1292" y="310" width="1" height="40" fill="#3edb3e"/>
<rect x="1290.5" y="340.5" width="4" height="4" fill="#000000" stroke="#3edb3e" stroke-width="1"/>
<rect x="1300" y="314" width="1" height="32" fill="#3edb3e"/>
<rect x="1298.5" y="339.5" width="4" height="1" fill="#000000" stroke="#3edb3e" stroke-width="1"/>
<rect x="1308" y="306" width="1" height="40" fill="#3edb3e"/>
<rect x="1306.5" y="316.5" width="4" height="24" fill="#000000" stroke="#3edb3e" stroke-width="1"/>
<rect x="1316" y="311" width="1" height="13" fill="#3edb3e"/>
<rect x="1314.5" y="316.5" width="4" height="4" fill="#ffffff" stroke="#3edb3e" stroke-width="1"/>
<rect x="1324" y="317" width="1" height="35" fill="#3edb3e"/>
<rect x="1322.5" y="319.5" width="4" height="26" fill="#ffffff" stroke="#3edb3e" stroke-width="1"/>
<rect x="1332" y="335" width="1" height="28" fill="#3edb3e"/>
<rect x="1330.5" y="336.5" width="4" height="8" fill="#000000" stroke="#3edb3e" stroke-width="1"/>
<rect x="1340" y="325" width="1" height="16" fill="#3edb3e"/>
<rect x="1338.5" y="336.5" width="4" height="3" fill="#ffffff" stroke="#3edb3e" stroke-width="1"/>
<rect x="1348" y="314" width="1" height="34" fill="#3edb3e"/>
<rect x="1346.5" y="326.5" width="4" height="13" fill="#000000" stroke="#3edb3e" stroke-width="1"/>
<rect x="1356" y="317" width="1" height="11" fill="#3edb3e"/>
<rect x="1354.5" y="324.5" width="4" height="2" fill="#ffffff" stroke="#3edb3e" stroke-width="1"/>
<rect x="1364" y="315" width="1" height="15" fill="#3edb3e"/>
<rect x="1362.5" y="323.5" width="4" height="4" fill="#ffffff" stroke="#3edb3e" stroke-width="1"/>
<rect x="1372" y="326" width="1" height="29" fill="#3edb3e"/>
<rect x="1370.5" y="327.5" width="4" height="21" fill="#ffffff" stroke="#3edb3e" stroke-width="1"/>
<rect x="1380" y="347" width="1" height="23" fill="#3edb3e"/>
<rect x="1378.5" y="348.5" width="4" height="14" fill="#ffffff" stroke="#3edb3e" stroke-width="1"/>
<rect x="1388" y="356" width="1" height="17" fill="#3edb3e"/>
<rect x="1386.5" y="361.5" width="4" height="3" fill="#ffffff" stroke="#3edb3e" stroke-width="1"/>
<rect x="1396" y="361" width="1" height="28" fill="#3edb3e"/>
<rect x="1394.5" y="364.5" width="4" height="23" fill="#ffffff" stroke="#3edb3e" stroke-width="1"/>
<rect x="1404" y="380" width="1" height="20" fill="#3edb3e"/>
<rect x="1402.5" y="386.5" width="4" height="10" fill="#ffffff" stroke="#3edb3e" stroke-width="1"/>
<rect x="1412" y="377" width="1" height="23" fill="#3edb3e"/>
<rect x="1410.5" y="379.5" width="4" height="16" fill="#000000" stroke="#3edb3e" stroke-width="1"/>
<rect x="1420" y="358" width="1" height="50" fill="#3edb3e"/>
<rect x="1418.5" y="379.5" width="4" height="25" fill="#ffffff" stroke="#3edb3e" stroke-width="1"/>
<rect x="1428" y="335" width="1" height="71" fill="#3edb3e"/>
<rect x="1426.5" y="350.5" width="4" height="53" fill="#000000" stroke="#3edb3e" stroke-width="1"/>
<rect x="1436" y="348" width="1" height="26" fill="#3edb3e"/>
<rect x="1434.5" y="349.5" width="4" height="9" fill="#ffffff" stroke="#3edb3e" stroke-width="1"/>
<rect x="1444" y="349" width="1" height="30" fill="#3edb3e"/>
<rect x="1442.5" y="358.5" width="4" height="19" fill="#ffffff" stroke="#3edb3e" stroke-width="1"/>
<rect x="1452" y="371" width="1" height="25" fill="#3edb3e"/>
<rect x="1450.5" y="378.5" width="4" height="7" fill="#ffffff" stroke="#3edb3e" stroke-width="1"/>
<rect x="1460" y="368" width="1" height="33" fill="#3edb3e"/>
<rect x="1458.5" y="370.5" width="4" height="15" fill="#000000" stroke="#3edb3e" stroke-width="1"/>
<rect x="1468" y="264" width="1" height="158" fill="#3edb3e"/>
<rect x="1466.5" y="292.5" width="4" height="79" fill="#000000" stroke="#3edb3e" stroke-width="1"/>
<rect x="1476" y="240" width="1" height="57" fill="#3edb3e"/>
<rect x="1474.5" y="261.5" width="4" height="32" fill="#000000" stroke="#3edb3e" stroke-width="1"/>
<rect x="1484" y="247" width="1" height="45" fill="#3edb3e"/>
<rect x="1482.5" y="260.5" width="4" height="28" fill="#ffffff" stroke="#3edb3e" stroke-width="1"/>
<rect x="1492" y="252" width="1" height="44" fill="#3edb3e"/>
<rect x="1490.5" y="252.5" width="4" height="35" fill="#000000" stroke="#3edb3e" stroke-width="1"/>
<rect x="1500" y="238" width="1" height="23" fill="#3edb3e"/>
<rect x="1498.5" y="253.5" width="4" height="2" fill="#000000" stroke="#3edb3e" stroke-width="1"/>
<rect x="1508" y="234" width="1" height="22" fill="#3edb3e"/>
<rect x="1506.5" y="242.5" width="4" height="12" fill="#000000" stroke="#3edb3e" stroke-width="1"/>
<rect x="1516" y="226" width="1" height="19" fill="#3edb3e"/>
<rect x="1514.5" y="230.5" width="4" height="13" fill="#000000" stroke="#3edb3e" stroke-width="1"/>
<rect x="1524" y="204" width="1" height="35" fill="#3edb3e"/>
<rect x="1522.5" y="205.5" width="4" height="27" fill="#000000" stroke="#3edb3e" stroke-width="1"/>
<rect x="1532" y="207" width="1" height="26" fill="#3edb3e"/>
<rect x="1530.5" y="208.5" width="4" height="24" fill="#ffffff" stroke="#3edb3e" stroke-width="1"/>
<rect x="1540" y="216" width="1" height="21" fill="#3edb3e"/>
<rect x="1538.5" y="223.5" width="4" height="9" fill="#000000" stroke="#3edb3e" stroke-width="1"/>
<rect x="1548" y="215" width="1" height="12" fill="#3edb3e"/>
<rect x="1546" y="224" width="5" height="1" fill="#3edb3e"/>
<rect x="1556" y="204" width="1" height="22" fill="#3edb3e"/>
<rect x="1554.5" y="210.5" width="4" height="14" fill="#000000" stroke="#3edb3e" stroke-width="1"/>
<rect x="1564" y="197" width="1" height="15" fill="#3edb3e"/>
<rect x="1562" y="208" width="5" height="1" fill="#3edb3e"/>
<rect x="1572" y="189" width="1" height="25" fill="#3edb3e"/>
<rect x="1570.5" y="199.5" width="4" height="8" fill="#000000" stroke="#3edb3e" stroke-width="1"/>
<rect x="1580" y="184" width="1" height="25" fill="#3edb3e"/>
<rect x="1578.5" y="193.5" width="4" height="5" fill="#000000" stroke="#3edb3e" stroke-width="1"/>
<rect x="1588" y="184" width="1" height="16" fill="#3edb3e"/>
<rect x="1586.5" y="193.5" width="4" height="4" fill="#ffffff" stroke="#3edb3e" stroke-width="1"/>
<rect x="1596" y="182" width="1" height="17" fill="#3edb3e"/>
<rect x="1594.5" y="185.5" width="4" height="13" fill="#000000" stroke="#3edb3e" stroke-width="1"/>
<rect x="1604" y="176" width="1" height="17" fill="#3edb3e"/>
<rect x="1602.5" y="181.5" width="4" height="4" fill="#000000" stroke="#3edb3e" stroke-width="1"/>
<rect x="1612" y="165" width="1" height="20" fill="#3edb3e"/>
<rect x="1610.5" y="167.5" width="4" height="14" fill="#000000" stroke="#3edb3e" stroke-width="1"/>
<rect x="1620" y="153" width="1" height="52" fill="#3edb3e"/>
<rect x="1618.5" y="167.5" width="4" height="32" fill="#ffffff" stroke="#3edb3e" stroke-width="1"/>
<rect x="1628" y="159" width="1" height="50" fill="#3edb3e"/>
<rect x="1626.5" y="174.5" width="4" height="25" fill="#000000" stroke="#3edb3e" stroke-width="1"/>
<rect x="1636" y="165" width="1" height="54" fill="#3edb3e"/>
<rect x="1634.5" y="174.5" width="4" height="26" fill="#ffffff" stroke="#3edb3e" stroke-width="1"/>
<rect x="1644" y="186" width="1" height="31" fill="#3edb3e"/>
<rect x="1642.5" y="201.5" width="4" height="10" fill="#ffffff" stroke="#3edb3e" stroke-width="1"/>
<rect x="1652" y="192" width="1" height="27" fill="#3edb3e"/>
<rect x="1650.5" y="196.5" width="4" height="17" fill="#000000" stroke="#3edb3e" stroke-width="1"/>
<rect x="1660" y="172" width="1" height="32" fill="#3edb3e"/>
<rect x="1658.5" y="179.5" width="4" height="16" fill="#000000" stroke="#3edb3e" stroke-width="1"/>
<polyline points="4.7,728.5 6.6,726.9 9.1,724.8 12.1,722.2 15.5,719.4 19.2,716.6 23.1,714.1 27.0,712.0 29.7,710.9 32.6,709.8 35.7,708.7 38.9,707.8 42.2,706.8 45.5,706.0 48.8,705.2 51.9,704.5 54.9,703.9 57.6,703.4 60.0,703.0 64.6,702.5 68.6,702.7 71.9,703.1 74.5,703.5 76.5,703.8 76.5,703.8 84.5,702.8 92.5,702.3 100.5,701.8 108.5,700.0 116.5,699.7 124.5,702.3 132.5,705.5 140.5,711.2 148.5,716.9 156.5,721.1 164.5,725.5 172.5,731.0 180.5,736.4 188.5,741.5 196.5,746.5 204.5,748.3 212.5,748.4 220.5,746.4 228.5,743.0 236.5,741.2 244.5,739.0 252.5,739.9 260.5,742.9 268.5,745.8 276.5,749.5 284.5,753.7 292.5,761.3 300.5,765.7 308.5,768.8 316.5,765.3 324.5,757.9 332.5,746.7 340.5,729.8 348.5,711.0 356.5,691.4 364.5,673.7 372.5,653.4 380.5,636.1 388.5,621.0 396.5,611.1 404.5,605.5 412.5,601.3 420.5,601.1 428.5,603.5 436.5,606.3 444.5,607.7 452.5,608.1 460.5,610.1 468.5,607.9 476.5,608.2 484.5,609.5 492.5,611.1 500.5,612.6 508.5,606.7 516.5,596.4 524.5,587.3 532.5,576.5 540.5,562.1 548.5,552.5 556.5,536.5 564.5,519.4 572.5,501.3 580.5,482.7 588.5,470.9 596.5,461.4 604.5,452.0 612.5,445.8 620.5,442.6 628.5,439.4 636.5,439.4 644.5,439.3 652.5,440.2 660.5,438.2 668.5,434.0 676.5,431.0 684.5,425.3 692.5,420.8 700.5,415.9 708.5,409.0 716.5,400.7 724.5,396.6 732.5,393.3 740.5,392.3 748.5,398.1 756.5,401.5 764.5,409.7 772.5,415.4 780.5,419.3 788.5,424.6 796.5,434.1 804.5,440.4 812.5,443.7 820.5,447.0 828.5,444.9 836.5,444.7 844.5,439.4 852.5,435.3 860.5,432.3 868.5,434.5 876.5,435.8 884.5,432.2 892.5,425.9 900.5,418.6 908.5,411.4 916.5,402.8 924.5,391.7 932.5,382.2 940.5,372.1 948.5,358.5 956.5,345.2 964.5,335.3 972.5,329.1 980.5,324.0 988.5,318.4 996.5,316.5 1004.5,321.0 1012.5,324.1 1020.5,327.8 1028.5,333.5 1036.5,338.7 1044.5,343.3 1052.5,351.4 1060.5,357.9 1068.5,367.8 1076.5,372.1 1084.5,380.2 1092.5,386.6 1100.5,390.7 1108.5,389.8 1116.5,387.2 1124.5,385.1 1132.5,380.6 1140.5,377.4 1148.5,372.3 1156.5,371.5 1164.5,365.7 1172.5,362.4 1180.5,360.1 1188.5,362.0 1196.5,364.8 1204.5,368.6 1212.5,372.6 1220.5,376.5 1228.5,381.1 1236.5,387.9 1244.5,391.8 1252.5,389.6 1260.5,386.1 1268.5,381.4 1276.5,374.7 1284.5,371.1 1292.5,365.8 1300.5,360.7 1308.5,352.3 1316.5,340.9 1324.5,334.8 1332.5,333.6 1340.5,334.3 1348.5,332.6 1356.5,333.2 1364.5,331.5 1372.5,332.2 1380.5,334.5 1388.5,339.3 1396.5,346.1 1404.5,351.1 1412.5,355.4 1420.5,361.9 1428.5,364.3 1436.5,367.5 1444.5,372.5 1452.5,376.1 1460.5,376.9 1468.5,369.7 1476.5,357.1 1484.5,346.3 1492.5,333.6 1500.5,318.4 1508.5,307.7 1516.5,294.9 1524.5,277.7 1532.5,262.4 1540.5,247.7 1548.5,240.9 1556.5,235.8 1564.5,227.8 1572.5,222.5 1580.5,216.5 1588.5,212.0 1596.5,207.5 1604.5,205.1 1612.5,198.7 1620.5,196.3 1628.5,191.4 1636.5,190.4 1644.5,190.8 1652.5,190.4 1660.5,189.0" fill="none" stroke="#c82a2a" stroke-width="1" shape-rendering="crispEdges"/>
</g>
<polygon points="1659,141 1670,141 1664.5,147" fill="#8090a0"/>
<g clip-path="url(#dc)">
<line x1="5" y1="917.5" x2="1848" y2="917.5" stroke="#c0c0c0" stroke-dasharray="3,3"/>
<line x1="12.5" y1="917" x2="12.5" y2="863.2" stroke="#d8d8d8" stroke-width="1"/>
<line x1="20.5" y1="917" x2="20.5" y2="863.2" stroke="#d8d8d8" stroke-width="1"/>
<line x1="28.5" y1="917" x2="28.5" y2="866.1" stroke="#d8d8d8" stroke-width="1"/>
<line x1="36.5" y1="917" x2="36.5" y2="866.7" stroke="#d8d8d8" stroke-width="1"/>
<line x1="44.5" y1="917" x2="44.5" y2="868.1" stroke="#d8d8d8" stroke-width="1"/>
<line x1="52.5" y1="917" x2="52.5" y2="869.0" stroke="#d8d8d8" stroke-width="1"/>
<line x1="60.5" y1="917" x2="60.5" y2="871.0" stroke="#d8d8d8" stroke-width="1"/>
<line x1="68.5" y1="917" x2="68.5" y2="871.9" stroke="#d8d8d8" stroke-width="1"/>
<line x1="76.5" y1="917" x2="76.5" y2="874.8" stroke="#d8d8d8" stroke-width="1"/>
<line x1="84.5" y1="917" x2="84.5" y2="876.9" stroke="#d8d8d8" stroke-width="1"/>
<line x1="92.5" y1="917" x2="92.5" y2="876.9" stroke="#d8d8d8" stroke-width="1"/>
<line x1="100.5" y1="917" x2="100.5" y2="879.2" stroke="#d8d8d8" stroke-width="1"/>
<line x1="108.5" y1="917" x2="108.5" y2="881.2" stroke="#d8d8d8" stroke-width="1"/>
<line x1="116.5" y1="917" x2="116.5" y2="885.0" stroke="#d8d8d8" stroke-width="1"/>
<line x1="124.5" y1="917" x2="124.5" y2="890.0" stroke="#d8d8d8" stroke-width="1"/>
<line x1="132.5" y1="917" x2="132.5" y2="894.4" stroke="#d8d8d8" stroke-width="1"/>
<line x1="140.5" y1="917" x2="140.5" y2="901.1" stroke="#d8d8d8" stroke-width="1"/>
<line x1="148.5" y1="917" x2="148.5" y2="906.9" stroke="#d8d8d8" stroke-width="1"/>
<line x1="156.5" y1="917" x2="156.5" y2="911.0" stroke="#d8d8d8" stroke-width="1"/>
<line x1="164.5" y1="917" x2="164.5" y2="912.7" stroke="#d8d8d8" stroke-width="1"/>
<line x1="172.5" y1="917" x2="172.5" y2="914.8" stroke="#d8d8d8" stroke-width="1"/>
<line x1="180.5" y1="917" x2="180.5" y2="916.2" stroke="#d8d8d8" stroke-width="1"/>
<line x1="188.5" y1="917" x2="188.5" y2="916.8" stroke="#d8d8d8" stroke-width="1"/>
<line x1="196.5" y1="917" x2="196.5" y2="919.2" stroke="#d8d8d8" stroke-width="1"/>
<line x1="204.5" y1="917" x2="204.5" y2="922.1" stroke="#d8d8d8" stroke-width="1"/>
<line x1="212.5" y1="917" x2="212.5" y2="919.7" stroke="#d8d8d8" stroke-width="1"/>
<line x1="220.5" y1="917" x2="220.5" y2="920.6" stroke="#d8d8d8" stroke-width="1"/>
<line x1="228.5" y1="917" x2="228.5" y2="918.6" stroke="#d8d8d8" stroke-width="1"/>
<line x1="236.5" y1="917" x2="236.5" y2="916.8" stroke="#d8d8d8" stroke-width="1"/>
<line x1="244.5" y1="917" x2="244.5" y2="914.8" stroke="#d8d8d8" stroke-width="1"/>
<line x1="252.5" y1="917" x2="252.5" y2="916.8" stroke="#d8d8d8" stroke-width="1"/>
<line x1="260.5" y1="917" x2="260.5" y2="923.5" stroke="#d8d8d8" stroke-width="1"/>
<line x1="268.5" y1="917" x2="268.5" y2="927.3" stroke="#d8d8d8" stroke-width="1"/>
<line x1="276.5" y1="917" x2="276.5" y2="932.3" stroke="#d8d8d8" stroke-width="1"/>
<line x1="284.5" y1="917" x2="284.5" y2="935.2" stroke="#d8d8d8" stroke-width="1"/>
<line x1="292.5" y1="917" x2="292.5" y2="938.1" stroke="#d8d8d8" stroke-width="1"/>
<line x1="300.5" y1="917" x2="300.5" y2="939.6" stroke="#d8d8d8" stroke-width="1"/>
<line x1="308.5" y1="917" x2="308.5" y2="939.0" stroke="#d8d8d8" stroke-width="1"/>
<line x1="316.5" y1="917" x2="316.5" y2="926.5" stroke="#d8d8d8" stroke-width="1"/>
<line x1="324.5" y1="917" x2="324.5" y2="911.0" stroke="#d8d8d8" stroke-width="1"/>
<line x1="332.5" y1="917" x2="332.5" y2="898.7" stroke="#d8d8d8" stroke-width="1"/>
<line x1="340.5" y1="917" x2="340.5" y2="886.5" stroke="#d8d8d8" stroke-width="1"/>
<line x1="348.5" y1="917" x2="348.5" y2="874.8" stroke="#d8d8d8" stroke-width="1"/>
<line x1="356.5" y1="917" x2="356.5" y2="867.2" stroke="#d8d8d8" stroke-width="1"/>
<line x1="364.5" y1="917" x2="364.5" y2="862.3" stroke="#d8d8d8" stroke-width="1"/>
<line x1="372.5" y1="917" x2="372.5" y2="857.9" stroke="#d8d8d8" stroke-width="1"/>
<line x1="380.5" y1="917" x2="380.5" y2="857.3" stroke="#d8d8d8" stroke-width="1"/>
<line x1="388.5" y1="917" x2="388.5" y2="855.0" stroke="#d8d8d8" stroke-width="1"/>
<line x1="396.5" y1="917" x2="396.5" y2="855.0" stroke="#d8d8d8" stroke-width="1"/>
<line x1="404.5" y1="917" x2="404.5" y2="854.4" stroke="#d8d8d8" stroke-width="1"/>
<line x1="412.5" y1="917" x2="412.5" y2="855.6" stroke="#d8d8d8" stroke-width="1"/>
<line x1="420.5" y1="917" x2="420.5" y2="856.5" stroke="#d8d8d8" stroke-width="1"/>
<line x1="428.5" y1="917" x2="428.5" y2="862.3" stroke="#d8d8d8" stroke-width="1"/>
<line x1="436.5" y1="917" x2="436.5" y2="867.2" stroke="#d8d8d8" stroke-width="1"/>
<line x1="444.5" y1="917" x2="444.5" y2="871.0" stroke="#d8d8d8" stroke-width="1"/>
<line x1="452.5" y1="917" x2="452.5" y2="874.0" stroke="#d8d8d8" stroke-width="1"/>
<line x1="460.5" y1="917" x2="460.5" y2="876.9" stroke="#d8d8d8" stroke-width="1"/>
<line x1="468.5" y1="917" x2="468.5" y2="875.4" stroke="#d8d8d8" stroke-width="1"/>
<line x1="476.5" y1="917" x2="476.5" y2="876.0" stroke="#d8d8d8" stroke-width="1"/>
<line x1="484.5" y1="917" x2="484.5" y2="877.7" stroke="#d8d8d8" stroke-width="1"/>
<line x1="492.5" y1="917" x2="492.5" y2="881.2" stroke="#d8d8d8" stroke-width="1"/>
<line x1="500.5" y1="917" x2="500.5" y2="881.2" stroke="#d8d8d8" stroke-width="1"/>
<line x1="508.5" y1="917" x2="508.5" y2="880.7" stroke="#d8d8d8" stroke-width="1"/>
<line x1="516.5" y1="917" x2="516.5" y2="874.0" stroke="#d8d8d8" stroke-width="1"/>
<line x1="524.5" y1="917" x2="524.5" y2="870.2" stroke="#d8d8d8" stroke-width="1"/>
<line x1="532.5" y1="917" x2="532.5" y2="862.3" stroke="#d8d8d8" stroke-width="1"/>
<line x1="540.5" y1="917" x2="540.5" y2="855.6" stroke="#d8d8d8" stroke-width="1"/>
<line x1="548.5" y1="917" x2="548.5" y2="851.5" stroke="#d8d8d8" stroke-width="1"/>
<line x1="556.5" y1="917" x2="556.5" y2="843.3" stroke="#d8d8d8" stroke-width="1"/>
<line x1="564.5" y1="917" x2="564.5" y2="836.0" stroke="#d8d8d8" stroke-width="1"/>
<line x1="572.5" y1="917" x2="572.5" y2="832.2" stroke="#d8d8d8" stroke-width="1"/>
<line x1="580.5" y1="917" x2="580.5" y2="831.1" stroke="#d8d8d8" stroke-width="1"/>
<line x1="588.5" y1="917" x2="588.5" y2="830.2" stroke="#d8d8d8" stroke-width="1"/>
<line x1="596.5" y1="917" x2="596.5" y2="830.2" stroke="#d8d8d8" stroke-width="1"/>
<line x1="604.5" y1="917" x2="604.5" y2="832.2" stroke="#d8d8d8" stroke-width="1"/>
<line x1="612.5" y1="917" x2="612.5" y2="834.0" stroke="#d8d8d8" stroke-width="1"/>
<line x1="620.5" y1="917" x2="620.5" y2="838.1" stroke="#d8d8d8" stroke-width="1"/>
<line x1="628.5" y1="917" x2="628.5" y2="843.3" stroke="#d8d8d8" stroke-width="1"/>
<line x1="636.5" y1="917" x2="636.5" y2="846.2" stroke="#d8d8d8" stroke-width="1"/>
<line x1="644.5" y1="917" x2="644.5" y2="848.6" stroke="#d8d8d8" stroke-width="1"/>
<line x1="652.5" y1="917" x2="652.5" y2="852.1" stroke="#d8d8d8" stroke-width="1"/>
<line x1="660.5" y1="917" x2="660.5" y2="852.1" stroke="#d8d8d8" stroke-width="1"/>
<line x1="668.5" y1="917" x2="668.5" y2="850.6" stroke="#d8d8d8" stroke-width="1"/>
<line x1="676.5" y1="917" x2="676.5" y2="850.6" stroke="#d8d8d8" stroke-width="1"/>
<line x1="684.5" y1="917" x2="684.5" y2="849.7" stroke="#d8d8d8" stroke-width="1"/>
<line x1="692.5" y1="917" x2="692.5" y2="849.2" stroke="#d8d8d8" stroke-width="1"/>
<line x1="700.5" y1="917" x2="700.5" y2="852.7" stroke="#d8d8d8" stroke-width="1"/>
<line x1="708.5" y1="917" x2="708.5" y2="852.7" stroke="#d8d8d8" stroke-width="1"/>
<line x1="716.5" y1="917" x2="716.5" y2="850.6" stroke="#d8d8d8" stroke-width="1"/>
<line x1="724.5" y1="917" x2="724.5" y2="854.4" stroke="#d8d8d8" stroke-width="1"/>
<line x1="732.5" y1="917" x2="732.5" y2="860.2" stroke="#d8d8d8" stroke-width="1"/>
<line x1="740.5" y1="917" x2="740.5" y2="865.2" stroke="#d8d8d8" stroke-width="1"/>
<line x1="748.5" y1="917" x2="748.5" y2="875.4" stroke="#d8d8d8" stroke-width="1"/>
<line x1="756.5" y1="917" x2="756.5" y2="881.2" stroke="#d8d8d8" stroke-width="1"/>
<line x1="764.5" y1="917" x2="764.5" y2="890.0" stroke="#d8d8d8" stroke-width="1"/>
<line x1="772.5" y1="917" x2="772.5" y2="895.8" stroke="#d8d8d8" stroke-width="1"/>
<line x1="780.5" y1="917" x2="780.5" y2="898.2" stroke="#d8d8d8" stroke-width="1"/>
<line x1="788.5" y1="917" x2="788.5" y2="901.7" stroke="#d8d8d8" stroke-width="1"/>
<line x1="796.5" y1="917" x2="796.5" y2="905.2" stroke="#d8d8d8" stroke-width="1"/>
<line x1="804.5" y1="917" x2="804.5" y2="908.1" stroke="#d8d8d8" stroke-width="1"/>
<line x1="812.5" y1="917" x2="812.5" y2="910.4" stroke="#d8d8d8" stroke-width="1"/>
<line x1="820.5" y1="917" x2="820.5" y2="911.0" stroke="#d8d8d8" stroke-width="1"/>
<line x1="828.5" y1="917" x2="828.5" y2="911.0" stroke="#d8d8d8" stroke-width="1"/>
<line x1="836.5" y1="917" x2="836.5" y2="911.0" stroke="#d8d8d8" stroke-width="1"/>
<line x1="844.5" y1="917" x2="844.5" y2="907.5" stroke="#d8d8d8" stroke-width="1"/>
<line x1="852.5" y1="917" x2="852.5" y2="905.2" stroke="#d8d8d8" stroke-width="1"/>
<line x1="860.5" y1="917" x2="860.5" y2="904.0" stroke="#d8d8d8" stroke-width="1"/>
<line x1="868.5" y1="917" x2="868.5" y2="909.0" stroke="#d8d8d8" stroke-width="1"/>
<line x1="876.5" y1="917" x2="876.5" y2="913.9" stroke="#d8d8d8" stroke-width="1"/>
<line x1="884.5" y1="917" x2="884.5" y2="911.0" stroke="#d8d8d8" stroke-width="1"/>
<line x1="892.5" y1="917" x2="892.5" y2="905.2" stroke="#d8d8d8" stroke-width="1"/>
<line x1="900.5" y1="917" x2="900.5" y2="898.7" stroke="#d8d8d8" stroke-width="1"/>
<line x1="908.5" y1="917" x2="908.5" y2="894.4" stroke="#d8d8d8" stroke-width="1"/>
<line x1="916.5" y1="917" x2="916.5" y2="888.5" stroke="#d8d8d8" stroke-width="1"/>
<line x1="924.5" y1="917" x2="924.5" y2="877.7" stroke="#d8d8d8" stroke-width="1"/>
<line x1="932.5" y1="917" x2="932.5" y2="872.5" stroke="#d8d8d8" stroke-width="1"/>
<line x1="940.5" y1="917" x2="940.5" y2="868.1" stroke="#d8d8d8" stroke-width="1"/>
<line x1="948.5" y1="917" x2="948.5" y2="866.1" stroke="#d8d8d8" stroke-width="1"/>
<line x1="956.5" y1="917" x2="956.5" y2="866.1" stroke="#d8d8d8" stroke-width="1"/>
<line x1="964.5" y1="917" x2="964.5" y2="866.1" stroke="#d8d8d8" stroke-width="1"/>
<line x1="972.5" y1="917" x2="972.5" y2="866.1" stroke="#d8d8d8" stroke-width="1"/>
<line x1="980.5" y1="917" x2="980.5" y2="867.2" stroke="#d8d8d8" stroke-width="1"/>
<line x1="988.5" y1="917" x2="988.5" y2="868.1" stroke="#d8d8d8" stroke-width="1"/>
<line x1="996.5" y1="917" x2="996.5" y2="870.2" stroke="#d8d8d8" stroke-width="1"/>
<line x1="1004.5" y1="917" x2="1004.5" y2="874.8" stroke="#d8d8d8" stroke-width="1"/>
<line x1="1012.5" y1="917" x2="1012.5" y2="877.7" stroke="#d8d8d8" stroke-width="1"/>
<line x1="1020.5" y1="917" x2="1020.5" y2="882.7" stroke="#d8d8d8" stroke-width="1"/>
<line x1="1028.5" y1="917" x2="1028.5" y2="890.6" stroke="#d8d8d8" stroke-width="1"/>
<line x1="1036.5" y1="917" x2="1036.5" y2="897.3" stroke="#d8d8d8" stroke-width="1"/>
<line x1="1044.5" y1="917" x2="1044.5" y2="900.2" stroke="#d8d8d8" stroke-width="1"/>
<line x1="1052.5" y1="917" x2="1052.5" y2="908.1" stroke="#d8d8d8" stroke-width="1"/>
<line x1="1060.5" y1="917" x2="1060.5" y2="911.0" stroke="#d8d8d8" stroke-width="1"/>
<line x1="1068.5" y1="917" x2="1068.5" y2="917.1" stroke="#d8d8d8" stroke-width="1"/>
<line x1="1076.5" y1="917" x2="1076.5" y2="917.7" stroke="#d8d8d8" stroke-width="1"/>
<line x1="1084.5" y1="917" x2="1084.5" y2="925.0" stroke="#d8d8d8" stroke-width="1"/>
<line x1="1092.5" y1="917" x2="1092.5" y2="925.6" stroke="#d8d8d8" stroke-width="1"/>
<line x1="1100.5" y1="917" x2="1100.5" y2="927.9" stroke="#d8d8d8" stroke-width="1"/>
<line x1="1108.5" y1="917" x2="1108.5" y2="924.4" stroke="#d8d8d8" stroke-width="1"/>
<line x1="1116.5" y1="917" x2="1116.5" y2="921.5" stroke="#d8d8d8" stroke-width="1"/>
<line x1="1124.5" y1="917" x2="1124.5" y2="916.8" stroke="#d8d8d8" stroke-width="1"/>
<line x1="1132.5" y1="917" x2="1132.5" y2="915.7" stroke="#d8d8d8" stroke-width="1"/>
<line x1="1140.5" y1="917" x2="1140.5" y2="912.7" stroke="#d8d8d8" stroke-width="1"/>
<line x1="1148.5" y1="917" x2="1148.5" y2="911.0" stroke="#d8d8d8" stroke-width="1"/>
<line x1="1156.5" y1="917" x2="1156.5" y2="911.9" stroke="#d8d8d8" stroke-width="1"/>
<line x1="1164.5" y1="917" x2="1164.5" y2="912.7" stroke="#d8d8d8" stroke-width="1"/>
<line x1="1172.5" y1="917" x2="1172.5" y2="913.9" stroke="#d8d8d8" stroke-width="1"/>
<line x1="1180.5" y1="917" x2="1180.5" y2="913.3" stroke="#d8d8d8" stroke-width="1"/>
<line x1="1188.5" y1="917" x2="1188.5" y2="916.2" stroke="#d8d8d8" stroke-width="1"/>
<line x1="1196.5" y1="917" x2="1196.5" y2="918.6" stroke="#d8d8d8" stroke-width="1"/>
<line x1="1204.5" y1="917" x2="1204.5" y2="919.7" stroke="#d8d8d8" stroke-width="1"/>
<line x1="1212.5" y1="917" x2="1212.5" y2="922.7" stroke="#d8d8d8" stroke-width="1"/>
<line x1="1220.5" y1="917" x2="1220.5" y2="923.5" stroke="#d8d8d8" stroke-width="1"/>
<line x1="1228.5" y1="917" x2="1228.5" y2="925.6" stroke="#d8d8d8" stroke-width="1"/>
<line x1="1236.5" y1="917" x2="1236.5" y2="931.4" stroke="#d8d8d8" stroke-width="1"/>
<line x1="1244.5" y1="917" x2="1244.5" y2="933.2" stroke="#d8d8d8" stroke-width="1"/>
<line x1="1252.5" y1="917" x2="1252.5" y2="925.6" stroke="#d8d8d8" stroke-width="1"/>
<line x1="1260.5" y1="917" x2="1260.5" y2="918.6" stroke="#d8d8d8" stroke-width="1"/>
<line x1="1268.5" y1="917" x2="1268.5" y2="914.8" stroke="#d8d8d8" stroke-width="1"/>
<line x1="1276.5" y1="917" x2="1276.5" y2="908.1" stroke="#d8d8d8" stroke-width="1"/>
<line x1="1284.5" y1="917" x2="1284.5" y2="906.0" stroke="#d8d8d8" stroke-width="1"/>
<line x1="1292.5" y1="917" x2="1292.5" y2="904.6" stroke="#d8d8d8" stroke-width="1"/>
<line x1="1300.5" y1="917" x2="1300.5" y2="903.1" stroke="#d8d8d8" stroke-width="1"/>
<line x1="1308.5" y1="917" x2="1308.5" y2="898.7" stroke="#d8d8d8" stroke-width="1"/>
<line x1="1316.5" y1="917" x2="1316.5" y2="897.3" stroke="#d8d8d8" stroke-width="1"/>
<line x1="1324.5" y1="917" x2="1324.5" y2="898.2" stroke="#d8d8d8" stroke-width="1"/>
<line x1="1332.5" y1="917" x2="1332.5" y2="898.7" stroke="#d8d8d8" stroke-width="1"/>
<line x1="1340.5" y1="917" x2="1340.5" y2="898.7" stroke="#d8d8d8" stroke-width="1"/>
<line x1="1348.5" y1="917" x2="1348.5" y2="899.3" stroke="#d8d8d8" stroke-width="1"/>
<line x1="1356.5" y1="917" x2="1356.5" y2="898.2" stroke="#d8d8d8" stroke-width="1"/>
<line x1="1364.5" y1="917" x2="1364.5" y2="898.7" stroke="#d8d8d8" stroke-width="1"/>
<line x1="1372.5" y1="917" x2="1372.5" y2="901.1" stroke="#d8d8d8" stroke-width="1"/>
<line x1="1380.5" y1="917" x2="1380.5" y2="904.6" stroke="#d8d8d8" stroke-width="1"/>
<line x1="1388.5" y1="917" x2="1388.5" y2="909.0" stroke="#d8d8d8" stroke-width="1"/>
<line x1="1396.5" y1="917" x2="1396.5" y2="913.9" stroke="#d8d8d8" stroke-width="1"/>
<line x1="1404.5" y1="917" x2="1404.5" y2="917.7" stroke="#d8d8d8" stroke-width="1"/>
<line x1="1412.5" y1="917" x2="1412.5" y2="923.5" stroke="#d8d8d8" stroke-width="1"/>
<line x1="1420.5" y1="917" x2="1420.5" y2="927.9" stroke="#d8d8d8" stroke-width="1"/>
<line x1="1428.5" y1="917" x2="1428.5" y2="925.0" stroke="#d8d8d8" stroke-width="1"/>
<line x1="1436.5" y1="917" x2="1436.5" y2="923.5" stroke="#d8d8d8" stroke-width="1"/>
<line x1="1444.5" y1="917" x2="1444.5" y2="924.4" stroke="#d8d8d8" stroke-width="1"/>
<line x1="1452.5" y1="917" x2="1452.5" y2="926.5" stroke="#d8d8d8" stroke-width="1"/>
<line x1="1460.5" y1="917" x2="1460.5" y2="925.0" stroke="#d8d8d8" stroke-width="1"/>
<line x1="1468.5" y1="917" x2="1468.5" y2="915.7" stroke="#d8d8d8" stroke-width="1"/>
<line x1="1476.5" y1="917" x2="1476.5" y2="903.1" stroke="#d8d8d8" stroke-width="1"/>
<line x1="1484.5" y1="917" x2="1484.5" y2="898.2" stroke="#d8d8d8" stroke-width="1"/>
<line x1="1492.5" y1="917" x2="1492.5" y2="889.4" stroke="#d8d8d8" stroke-width="1"/>
<line x1="1500.5" y1="917" x2="1500.5" y2="882.7" stroke="#d8d8d8" stroke-width="1"/>
<line x1="1508.5" y1="917" x2="1508.5" y2="876.9" stroke="#d8d8d8" stroke-width="1"/>
<line x1="1516.5" y1="917" x2="1516.5" y2="871.0" stroke="#d8d8d8" stroke-width="1"/>
<line x1="1524.5" y1="917" x2="1524.5" y2="864.3" stroke="#d8d8d8" stroke-width="1"/>
<line x1="1532.5" y1="917" x2="1532.5" y2="862.3" stroke="#d8d8d8" stroke-width="1"/>
<line x1="1540.5" y1="917" x2="1540.5" y2="860.2" stroke="#d8d8d8" stroke-width="1"/>
<line x1="1548.5" y1="917" x2="1548.5" y2="860.2" stroke="#d8d8d8" stroke-width="1"/>
<line x1="1556.5" y1="917" x2="1556.5" y2="859.4" stroke="#d8d8d8" stroke-width="1"/>
<line x1="1564.5" y1="917" x2="1564.5" y2="857.9" stroke="#d8d8d8" stroke-width="1"/>
<line x1="1572.5" y1="917" x2="1572.5" y2="856.5" stroke="#d8d8d8" stroke-width="1"/>
<line x1="1580.5" y1="917" x2="1580.5" y2="856.5" stroke="#d8d8d8" stroke-width="1"/>
<line x1="1588.5" y1="917" x2="1588.5" y2="856.5" stroke="#d8d8d8" stroke-width="1"/>
<line x1="1596.5" y1="917" x2="1596.5" y2="856.5" stroke="#d8d8d8" stroke-width="1"/>
<line x1="1604.5" y1="917" x2="1604.5" y2="856.5" stroke="#d8d8d8" stroke-width="1"/>
<line x1="1612.5" y1="917" x2="1612.5" y2="855.6" stroke="#d8d8d8" stroke-width="1"/>
<line x1="1620.5" y1="917" x2="1620.5" y2="856.5" stroke="#d8d8d8" stroke-width="1"/>
<line x1="1628.5" y1="917" x2="1628.5" y2="858.5" stroke="#d8d8d8" stroke-width="1"/>
<line x1="1636.5" y1="917" x2="1636.5" y2="863.2" stroke="#d8d8d8" stroke-width="1"/>
<line x1="1644.5" y1="917" x2="1644.5" y2="869.0" stroke="#d8d8d8" stroke-width="1"/>
<line x1="1652.5" y1="917" x2="1652.5" y2="871.9" stroke="#d8d8d8" stroke-width="1"/>
<line x1="1660.5" y1="917" x2="1660.5" y2="873.1" stroke="#d8d8d8" stroke-width="1"/>
<polyline points="4.4,878.3 17.5,871.0 38.0,866.7 67.0,866.7 110.8,874.0 131.0,879.8 163.0,895.8 198.0,913.3 216.0,918.6 262.5,919.2 285.8,923.5 309.0,929.4 332.5,926.5 350.0,913.3 379.0,881.2 408.0,860.8 428.7,857.3 446.0,860.2 478.3,871.0 501.6,877.7 519.0,877.7 539.6,874.0 550.0,871.0 579.2,850.6 602.5,838.0 623.0,834.6 646.3,838.0 672.5,846.2 701.7,850.6 736.7,853.5 760.0,862.3 792.0,881.3 818.3,897.3 841.7,906.0 870.8,909.0 900.0,907.0 929.2,894.4 958.3,879.8 987.5,868.0 1016.7,871.0 1045.8,884.2 1075.0,900.2 1100.0,914.8 1114.6,919.2 1143.7,920.6 1167.0,916.8 1193.3,913.3 1222.5,916.2 1251.7,923.5 1275.0,920.6 1304.2,914.8 1333.3,901.7 1362.5,898.7 1380.0,899.3 1406.2,907.5 1435.4,916.2 1464.6,923.5 1485.0,917.7 1508.3,900.2 1537.5,878.3 1566.7,863.7 1595.8,857.3 1625.0,856.5 1660.0,862.3" fill="none" stroke="#d03030" stroke-width="1.2" stroke-dasharray="3,3"/>
</g>
<line x1="1849" y1="144.5" x2="1853" y2="144.5" stroke="#fff"/>
<line x1="1849" y1="176.5" x2="1853" y2="176.5" stroke="#fff"/>
<line x1="1849" y1="208.5" x2="1853" y2="208.5" stroke="#fff"/>
<line x1="1849" y1="240.5" x2="1853" y2="240.5" stroke="#fff"/>
<line x1="1849" y1="272.5" x2="1853" y2="272.5" stroke="#fff"/>
<line x1="1849" y1="304.5" x2="1853" y2="304.5" stroke="#fff"/>
<line x1="1849" y1="336.5" x2="1853" y2="336.5" stroke="#fff"/>
<line x1="1849" y1="368.5" x2="1853" y2="368.5" stroke="#fff"/>
<line x1="1849" y1="400.5" x2="1853" y2="400.5" stroke="#fff"/>
<line x1="1849" y1="432.5" x2="1853" y2="432.5" stroke="#fff"/>
<line x1="1849" y1="465.5" x2="1853" y2="465.5" stroke="#fff"/>
<line x1="1849" y1="497.5" x2="1853" y2="497.5" stroke="#fff"/>
<line x1="1849" y1="529.5" x2="1853" y2="529.5" stroke="#fff"/>
<line x1="1849" y1="561.5" x2="1853" y2="561.5" stroke="#fff"/>
<line x1="1849" y1="593.5" x2="1853" y2="593.5" stroke="#fff"/>
<line x1="1849" y1="625.5" x2="1853" y2="625.5" stroke="#fff"/>
<line x1="1849" y1="657.5" x2="1853" y2="657.5" stroke="#fff"/>
<line x1="1849" y1="689.5" x2="1853" y2="689.5" stroke="#fff"/>
<line x1="1849" y1="721.5" x2="1853" y2="721.5" stroke="#fff"/>
<line x1="1849" y1="753.5" x2="1853" y2="753.5" stroke="#fff"/>
<line x1="1849" y1="785.5" x2="1853" y2="785.5" stroke="#fff"/>
<line x1="1849" y1="820.5" x2="1853" y2="820.5" stroke="#fff"/>
<line x1="1849" y1="917.5" x2="1853" y2="917.5" stroke="#fff"/>
<line x1="1849" y1="950.5" x2="1853" y2="950.5" stroke="#fff"/>
<line x1="4.5" y1="950" x2="4.5" y2="955" stroke="#fff"/>
<line x1="132.5" y1="950" x2="132.5" y2="955" stroke="#fff"/>
<line x1="260.5" y1="950" x2="260.5" y2="955" stroke="#fff"/>
<line x1="388.5" y1="950" x2="388.5" y2="955" stroke="#fff"/>
<line x1="516.5" y1="950" x2="516.5" y2="955" stroke="#fff"/>
<line x1="644.5" y1="950" x2="644.5" y2="955" stroke="#fff"/>
<line x1="772.5" y1="950" x2="772.5" y2="955" stroke="#fff"/>
<line x1="900.5" y1="950" x2="900.5" y2="955" stroke="#fff"/>
<line x1="1028.5" y1="950" x2="1028.5" y2="955" stroke="#fff"/>
<line x1="1156.5" y1="950" x2="1156.5" y2="955" stroke="#fff"/>
<line x1="1284.5" y1="950" x2="1284.5" y2="955" stroke="#fff"/>
<line x1="1412.5" y1="950" x2="1412.5" y2="955" stroke="#fff"/>
<line x1="1540.5" y1="950" x2="1540.5" y2="955" stroke="#fff"/>
<rect x="1851" y="168" width="54" height="4" fill="#ff2020"/>
<rect x="1851" y="172" width="54" height="14" fill="#778899"/>
<rect x="9" y="146" width="17" height="14" rx="1.5" fill="#f4f4f4" stroke="#c8c8c8"/><rect x="11" y="149" width="6" height="2" fill="#e05050"/><rect x="18" y="149" width="6" height="2" fill="#6080e0"/><rect x="11" y="152" width="6" height="2" fill="#e05050"/><rect x="18" y="152" width="6" height="2" fill="#6080e0"/><rect x="11" y="155" width="6" height="2" fill="#e05050"/><rect x="18" y="155" width="6" height="2" fill="#6080e0"/>
<rect x="31" y="147" width="9" height="13" fill="#3050e0"/><rect x="40" y="147" width="9" height="13" fill="#e03030"/><rect x="36" y="145" width="8" height="7" rx="1" fill="#a0a0a0"/>
</svg>
<div class="pl" style="top:137px">1.19765</div>
<div class="pl" style="top:201px">1.19535</div>
<div class="pl" style="top:233px">1.19420</div>
<div class="pl" style="top:265px">1.19305</div>
<div class="pl" style="top:297px">1.19190</div>
<div class="pl" style="top:329px">1.19075</div>
<div class="pl" style="top:361px">1.18960</div>
<div class="pl" style="top:393px">1.18845</div>
<div class="pl" style="top:425px">1.18730</div>
<div class="pl" style="top:458px">1.18615</div>
<div class="pl" style="top:490px">1.18500</div>
<div class="pl" style="top:522px">1.18385</div>
<div class="pl" style="top:586px">1.18155</div>
<div class="pl" style="top:618px">1.18040</div>
<div class="pl" style="top:650px">1.17925</div>
<div class="pl" style="top:682px">1.17810</div>
<div class="pl" style="top:714px">1.17695</div>
<div class="pl" style="top:746px">1.17580</div>
<div class="pl" style="top:778px">1.17465</div>
<div class="tl" style="left:4px">2 Apr 2021</div>
<div class="tl" style="left:132px">2 Apr 16:00</div>
<div class="tl" style="left:260px">5 Apr 08:00</div>
<div class="tl" style="left:388px">6 Apr 00:00</div>
<div class="tl" style="left:516px">6 Apr 16:00</div>
<div class="tl" style="left:644px">7 Apr 08:00</div>
<div class="tl" style="left:772px">8 Apr 00:00</div>
<div class="tl" style="left:900px">8 Apr 16:00</div>
<div class="tl" style="left:1028px">9 Apr 08:00</div>
<div class="tl" style="left:1156px">12 Apr 00:00</div>
<div class="tl" style="left:1284px">12 Apr 16:00</div>
<div class="tl" style="left:1412px">13 Apr 08:00</div>
<div class="tl" style="left:1540px">14 Apr 00:00</div>
<div class="ct" style="left:57px;top:146px;font-size:11.6px">EURUSDmicro, H1:&nbsp; Euro vs US Dollar</div>
<div class="ct" style="left:11px;top:176px;letter-spacing:0.3px">BUY 3 at 1.19604</div>
<div class="ct" style="left:12px;top:323px">SELL STOP 3 at 1.19073</div>
<div class="ct" style="left:7px;top:823px">MACD(12,26,9) 0.001033 0.001267</div>
<div class="pl" style="top:172px;color:#000;left:1854px;line-height:16px">1.19639</div>
<div class="pl" style="top:819px">0.002263</div>
<div class="pl" style="top:910px">0.000000</div>
<div class="pl" style="top:936px">-0.000763</div>
<div class="a" style="left:1808px;top:552px;width:110px;height:25px;background:#fff;border:1px solid #767676;font-size:14.5px;color:#575757;line-height:24px;padding-left:5px;white-space:nowrap">Vertkálna škála</div>
<div id="tabs" class="a">
  <div class="a" style="left:0;top:0;width:1920px;height:1px;background:#fff"></div>
  <div class="a" style="left:148px;top:1px;width:1772px;height:1px;background:#1a1a1a"></div>
  <div class="a" style="left:0;top:0;width:2px;height:26px;background:#b0b0b0"></div>
  <div class="a" style="left:4px;top:1px;width:144px;height:25px;background:#fff;border:1px solid #000;border-top:none;font-size:14.3px;color:#000;line-height:27px;text-align:center">EURUSDmicro,H1</div>
  <span class="a" style="left:162px;top:8px;font-size:14px;color:#6d6d6d;white-space:nowrap">USDJPYmicro,H1</span>
  <div class="a" style="left:285px;top:5px;width:1px;height:19px;background:#707070"></div>
  <span class="a" style="left:300px;top:8px;font-size:14px;color:#6d6d6d;white-space:nowrap">EURJPYmicro,H1</span>
  <svg class="a" style="left:1870px;top:8px" width="40" height="12"><polygon points="9,1 9,10 4,5.5" fill="#a8a8a8"/><polygon points="31,1 31,10 36,5.5" fill="#a8a8a8"/></svg>
</div>
<div id="status" class="a">
  <span style="left:3px">Pre nápovedu stlačte F1</span>
  <div class="sep" style="left:1049px"></div>
  <span style="left:1055px">XM</span>
  <div class="sep" style="left:1214px"></div>
  <div class="sep" style="left:1339px"></div>
  <div class="sep" style="left:1428px"></div>
  <div class="sep" style="left:1517px"></div>
  <div class="sep" style="left:1602px"></div>
  <div class="sep" style="left:1689px"></div>
  <div class="sep" style="left:1774px"></div>
  <svg class="a" style="left:1777px;top:2px" width="26" height="24"><rect x="3" y="3" width="11" height="17" fill="#3a8ad8"/><rect x="6" y="1" width="11" height="17" fill="#5aa8f0" stroke="#2a70c0" stroke-width="0.8"/><path d="M8 5H15M8 8H15M8 11H13" stroke="#fff" stroke-width="1"/><circle cx="17" cy="17" r="5" fill="#44bb44"/><path d="M14.5 17L16.5 19L19.5 15" stroke="#fff" stroke-width="1.5" fill="none"/></svg>
  <span style="left:1805px">290 / 3 Kb</span>
</div>
<div id="task" class="a">
  <svg class="a" style="left:0;top:0" width="1920" height="49">
    <!-- windows logo -->
    <g fill="#000"><path d="M20 15.5L28.5 14.3V22.8H20Z"/><path d="M29.8 14.1L40 12.6V22.8H29.8Z"/><path d="M20 24.1H28.5V32.7L20 31.5Z"/><path d="M29.8 24.1H40V34.4L29.8 32.9Z"/></g>
    <!-- search box -->
    <rect x="61" y="0" width="428" height="49" fill="#fff"/>
    <circle cx="90" cy="19.5" r="6.5" fill="none" stroke="#222" stroke-width="1.6"/>
    <path d="M85.5 24L78.5 31.5" stroke="#222" stroke-width="1.8"/>
    <!-- cortana -->
    <circle cx="520" cy="23.5" r="8" fill="none" stroke="#000" stroke-width="2.6"/>
    <!-- task view -->
    <path d="M570 16H586M570 31H586M573 19H584V28H573Z" stroke="#000" stroke-width="1.5" fill="none"/>
    <path d="M589.5 14V21M589.5 24V26M589.5 29V34" stroke="#000" stroke-width="1.5"/>
    <!-- edge -->
    <defs><linearGradient id="eg" x1="0" y1="0" x2="1" y2="0.7"><stop offset="0" stop-color="#1f9ee8"/><stop offset="0.45" stop-color="#28c0c8"/><stop offset="1" stop-color="#66e060"/></linearGradient></defs>
    <g transform="translate(643.75 23.8)">
      <circle cx="0" cy="0" r="15" fill="url(#eg)"/>
      <path d="M-14.6 -3.5C-10 -9 0 -9 3.5 -2C4.5 1 3 4 0.5 4.5C4 6 9 6.5 12.5 8A15 15 0 0 1 -14.6 -3.5Z" fill="#1a86d8"/>
      <path d="M-3.5 0.5C-6 6 -2 13 4 14.4A15 15 0 0 0 12.5 8C8 6.5 3 6 0.5 4.5C-2 4 -3.5 2.5 -3.5 0.5Z" fill="#1560b0"/>
      <path d="M3 3C6 3.6 11 3 14.7 2.5A15 15 0 0 1 12.5 8C9 6.5 5 5.5 0.6 3.6Z" fill="#dcdcdc"/><circle cx="0" cy="1" r="3.4" fill="#dcdcdc"/>
    </g>
    <rect x="619" y="46" width="51" height="3" fill="#0078d7"/>
    <!-- explorer -->
    <path d="M692 12H705L707 14V16H692Z" fill="#e0a810"/>
    <rect x="692" y="14" width="28" height="20" fill="#ffd658"/>
    <path d="M697 34.5V24H715V34.5H710V29H702V34.5Z" fill="#3a8ee0"/>
    <!-- store -->
    <path d="M759 17V13Q759 9 767 9Q775 9 775 13V17" stroke="#333" stroke-width="2.5" fill="none"/>
    <rect x="752" y="16" width="30" height="24" rx="2" fill="#3c3c3c"/>
    <rect x="762" y="22" width="6" height="6" fill="#f35325"/><rect x="769" y="22" width="6" height="6" fill="#81bc06"/>
    <rect x="762" y="29" width="6" height="6" fill="#05a6f0"/><rect x="769" y="29" width="6" height="6" fill="#ffba08"/>
    <!-- mail -->
    <path d="M814 20L830 10L845 20V38H814Z" fill="#1a78c8"/>
    <path d="M817 17H842V28H817Z" fill="#fff"/>
    <path d="M814 22L830 31L845 22V38H814Z" fill="#3aa8f0"/>
    <path d="M814 38L830 27L845 38Z" fill="#2090e0"/>
    <!-- L app -->
    <rect x="877" y="9" width="30" height="30" fill="#29a8dc"/>
    <path d="M887 15H893V30H901V35H884Z" fill="#fff"/>
    <path d="M884 35L887 15L889 16L887 35Z" fill="#1a3a8a"/>
    <!-- XM active -->
    <rect x="924" y="0" width="61" height="49" fill="#ececec"/>
    <rect x="924" y="46" width="61" height="3" fill="#0078d7"/>
    <rect x="939" y="9" width="30" height="30" rx="4" fill="#111"/>
    <text x="955.5" y="29.5" font-family="Liberation Sans" font-size="14" font-weight="bold" font-style="italic" fill="#fff" text-anchor="middle" letter-spacing="-0.6">XM</text>
    <path d="M942.5 19L946 23.5L942 28Z" fill="#e02020"/>
    <!-- purple app -->
    <path d="M1009 11L1026 11Q1032 12 1031.5 19Q1030.5 25 1023 36Z" fill="#8a38a8"/>
    <path d="M1005 11L1010 11L1023 36Z" fill="#30a040"/>
    <path d="M1001 11L1006 11L1017 27Z" fill="#d8e020"/>
    <!-- tray -->
    <path d="M1595 27.5L1603 19.5L1611 27.5" stroke="#000" stroke-width="1.5" fill="none"/>
    <rect x="1628" y="18" width="9" height="11" rx="1.5" fill="none" stroke="#000" stroke-width="1.3"/>
    <path d="M1637 21L1641 18.5V28.5L1637 26" stroke="#000" stroke-width="1.3" fill="none"/>
    <path d="M1629 16A8 8 0 0 1 1639 16M1629 31A8 8 0 0 0 1639 31" stroke="#000" stroke-width="1" fill="none"/>
    <path d="M1655 29Q1652 29 1652 26Q1652 23 1655 23Q1656 18 1662 18Q1668 18 1669 23Q1673 23 1673 26Q1673 29 1670 29Z" fill="#c8c8c8" stroke="#333" stroke-width="1.2"/>
    <circle cx="1667" cy="28.5" r="5.5" fill="#e01818"/>
    <rect x="1664" y="27.5" width="6" height="2" fill="#fff"/>
    <rect x="1686" y="18.5" width="15" height="10" fill="none" stroke="#000" stroke-width="1.3"/>
    <rect x="1701" y="21" width="2" height="5" fill="#000"/>
    <rect x="1687.5" y="20" width="3" height="7" fill="#000"/>
    <path d="M1684 15V18M1687 15V18M1683 18H1688V21Q1685.5 23 1685.5 25V30" stroke="#000" stroke-width="1.1" fill="none"/>
    <path d="M1717 31A14 14 0 0 1 1731 17M1720 31A11 11 0 0 1 1731 20M1723 31A8 8 0 0 1 1731 23M1726 31A5 5 0 0 1 1731 26" stroke="#000" stroke-width="1.1" fill="none"/>
    <circle cx="1729.5" cy="30" r="1.3" fill="#000"/>
    <path d="M1743 21H1747L1752 16V32L1747 27H1743Z" fill="none" stroke="#000" stroke-width="1.3"/>
    <path d="M1756 20L1762 27M1762 20L1756 27" stroke="#000" stroke-width="1.3"/>
    <text x="1810.5" y="18" font-family="Liberation Sans" font-size="14.5" fill="#000" text-anchor="middle">14:33</text>
    <text x="1811" y="41" font-family="Liberation Sans" font-size="14.5" fill="#000" text-anchor="middle">14. 4. 2021</text>
    <path d="M1869.5 15H1888.5V30H1882L1879 33L1876 30H1869.5Z" fill="none" stroke="#000" stroke-width="1.5"/>
    <rect x="1914" y="0" width="1" height="49" fill="#bdbdbd"/>
  </svg>
  <span class="a" style="left:110px;top:13px;font-size:18.7px;color:#333;white-space:nowrap">Vyhľadávaný pojem napíšte sem</span>
</div>

</body></html>
